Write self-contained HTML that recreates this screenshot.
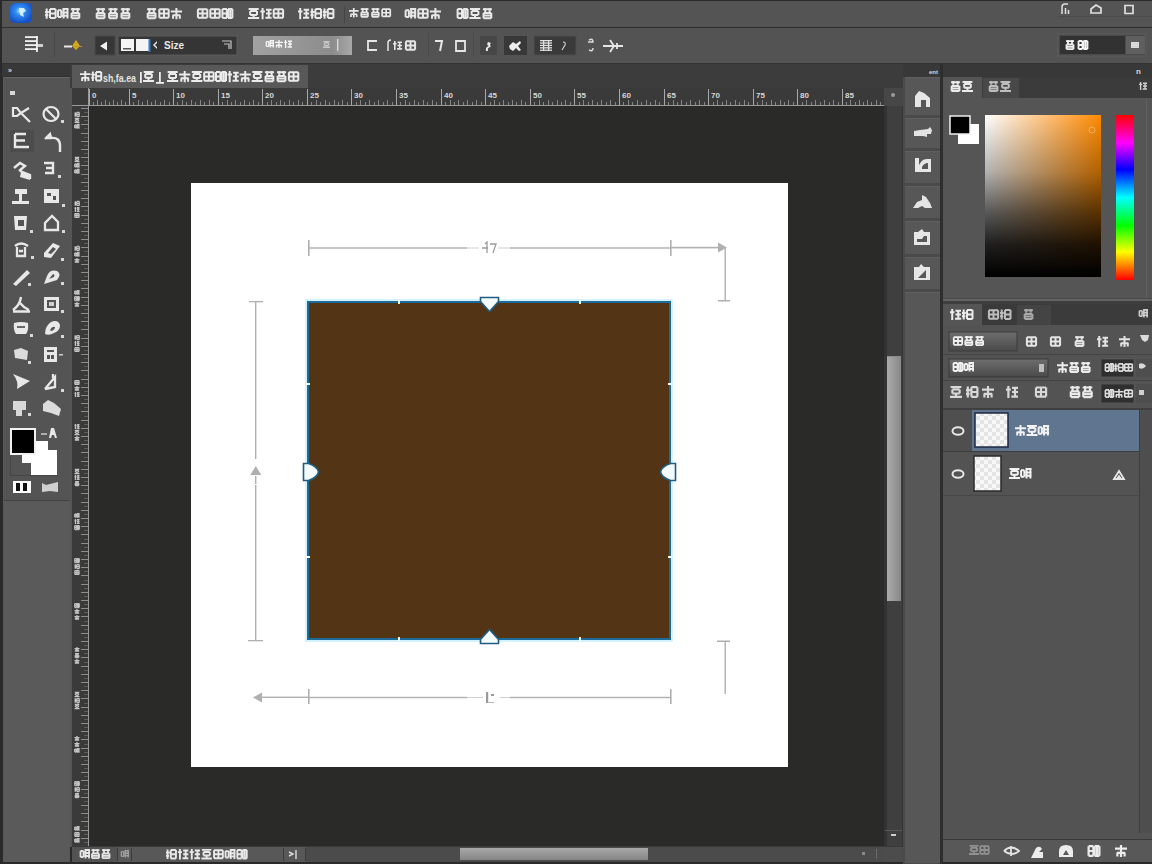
<!DOCTYPE html>
<html><head><meta charset="utf-8">
<style>
html,body{margin:0;padding:0;width:1152px;height:864px;overflow:hidden;background:#2a2a2a;font-family:"Liberation Sans",sans-serif;}
.a{position:absolute;}
.t{position:absolute;color:#e8e8e8;font-weight:bold;white-space:nowrap;}
</style></head><body>

<div class="a" style="left:0px;top:0px;width:1152px;height:864px;background:#2a2a2a;"></div>
<div class="a" style="left:2px;top:1px;width:1150px;height:26px;background:#545454;"></div>
<div class="a" style="left:2px;top:27px;width:1150px;height:1px;background:#2f2f2f;"></div>
<div class="a" style="left:2px;top:28px;width:1150px;height:35px;background:#535353;"></div>
<div class="a" style="left:2px;top:63px;width:1150px;height:1px;background:#333333;"></div>
<div class="a" style="left:2px;top:64px;width:68px;height:13px;background:#383838;"></div>
<div class="a" style="left:70px;top:64px;width:833px;height:24px;background:#3c3c3c;"></div>
<div class="a" style="left:903px;top:64px;width:249px;height:13px;background:#383838;"></div>
<div class="a" style="left:3px;top:77px;width:67px;height:785px;background:#535353;"></div>
<div class="a" style="left:72px;top:65px;width:236px;height:23px;background:#585858;"></div>
<div class="a" style="left:72px;top:88px;width:812px;height:18px;background:#3a3a3a;"></div>
<div class="a" style="left:72px;top:105px;width:812px;height:1px;background:#9a9a9a;"></div>
<div class="a" style="left:72px;top:106px;width:16px;height:741px;background:#3a3a3a;"></div>
<div class="a" style="left:88px;top:88px;width:1px;height:759px;background:#9a9a9a;"></div>
<div class="a" style="left:89px;top:106px;width:795px;height:741px;background:#2a2a29;"></div>
<div class="a" style="left:191px;top:183px;width:597px;height:584px;background:#ffffff;"></div>
<div class="a" style="left:307px;top:301px;width:360px;height:335px;background:#533515;border:2px solid #1e6a98"></div>
<div class="a" style="left:884px;top:88px;width:19px;height:759px;background:#3f3f3f;"></div>
<div class="a" style="left:887px;top:356px;width:14px;height:245px;background:#8c8c8c;"></div>
<div class="a" style="left:72px;top:847px;width:831px;height:15px;background:#4c4c4c;"></div>
<div class="a" style="left:460px;top:848px;width:188px;height:12px;background:#8a8a8a;"></div>
<div class="a" style="left:903px;top:77px;width:38px;height:787px;background:#4f4f4f;"></div>
<div class="a" style="left:943px;top:77px;width:209px;height:785px;background:#555555;"></div>
<svg class="a" style="left:0;top:0" width="1152" height="864" viewBox="0 0 1152 864">
<defs><radialGradient id="lg" cx="45%" cy="40%" r="60%"><stop offset="0" stop-color="#9fe0ff"/><stop offset="0.35" stop-color="#2f8cf0"/><stop offset="1" stop-color="#1450c8"/></radialGradient><linearGradient id="btn" x1="0" y1="0" x2="1" y2="0"><stop offset="0" stop-color="#a2a2a2"/><stop offset="0.8" stop-color="#8c8c8c"/><stop offset="0.9" stop-color="#9a9a9a"/><stop offset="1" stop-color="#a8a8a8"/></linearGradient><linearGradient id="dd" x1="0" y1="0" x2="0" y2="1"><stop offset="0" stop-color="#6e6e6e"/><stop offset="1" stop-color="#4a4a4a"/></linearGradient><linearGradient id="cpH" x1="0" y1="0" x2="1" y2="0"><stop offset="0" stop-color="#ffffff"/><stop offset="1" stop-color="#ff8a00"/></linearGradient><linearGradient id="cpV" x1="0" y1="0" x2="0" y2="1"><stop offset="0" stop-color="#000" stop-opacity="0"/><stop offset="0.35" stop-color="#000" stop-opacity="0.3"/><stop offset="0.6" stop-color="#000" stop-opacity="0.65"/><stop offset="0.8" stop-color="#000" stop-opacity="0.88"/><stop offset="1" stop-color="#000" stop-opacity="1"/></linearGradient><linearGradient id="hue" x1="0" y1="0" x2="0" y2="1"><stop offset="0" stop-color="#ff0000"/><stop offset="0.17" stop-color="#ff00ff"/><stop offset="0.33" stop-color="#0000ff"/><stop offset="0.5" stop-color="#00ffff"/><stop offset="0.67" stop-color="#00ff00"/><stop offset="0.83" stop-color="#ffff00"/><stop offset="1" stop-color="#ff0000"/></linearGradient><linearGradient id="thumb" x1="0" y1="0" x2="0" y2="1"><stop offset="0" stop-color="#a8a8a8"/><stop offset="1" stop-color="#868686"/></linearGradient><linearGradient id="vthumb" x1="0" y1="0" x2="1" y2="0"><stop offset="0" stop-color="#ababab"/><stop offset="1" stop-color="#888888"/></linearGradient><pattern id="chk" width="8" height="8" patternUnits="userSpaceOnUse"><rect width="8" height="8" fill="#f8f8f8"/><rect width="4" height="4" fill="#e4e4e4"/><rect x="4" y="4" width="4" height="4" fill="#e4e4e4"/></pattern></defs>
<rect x="10" y="3" width="22" height="20" rx="5" fill="url(#lg)"/>
<path d="M19 8 l5 0 l2 3 l-3 2 l1 4 l-4 -2 z" fill="#dff6ff" opacity="0.9"/>
<path d="M45.7 8.6h2.0v10.1h-2.0zM45.0 10.9h3.9v2.0h-3.9zM45.0 14.3h3.4v2.0h-3.4zM50.0 8.1h5.6v2.0h-5.6zM50.0 17.1h5.6v2.0h-5.6zM49.0 9.1h2.0v9.0h-2.0zM54.6 9.1h2.0v9.0h-2.0zM50.0 12.6h5.6v2.0h-5.6zM58.0 9.2h3.4v2.0h-3.4zM58.0 16.0h3.4v2.0h-3.4zM57.0 10.2h2.0v6.7h-2.0zM60.3 10.2h2.0v6.7h-2.0zM62.4 8.1h6.2v2.0h-6.2zM62.4 11.5h6.2v2.0h-6.2zM62.4 14.8h6.2v2.0h-6.2zM62.6 9.1h2.0v9.5h-2.0zM66.5 9.1h2.0v9.5h-2.0zM70.9 8.3h9.0v2.0h-9.0zM72.2 8.0h2.0v3.9h-2.0zM76.6 8.0h2.0v3.9h-2.0zM71.5 12.0h7.8v2.0h-7.8zM71.5 17.3h7.8v2.0h-7.8zM70.5 13.0h2.0v5.3h-2.0zM78.3 13.0h2.0v5.3h-2.0zM71.5 14.6h7.8v2.0h-7.8z" fill="#e8e8e8" opacity="1.0"/>
<path d="M96.1 8.3h9.0v2.0h-9.0zM97.4 8.0h2.0v3.9h-2.0zM101.8 8.0h2.0v3.9h-2.0zM96.7 12.0h7.8v2.0h-7.8zM96.7 17.3h7.8v2.0h-7.8zM95.7 13.0h2.0v5.3h-2.0zM103.5 13.0h2.0v5.3h-2.0zM96.7 14.6h7.8v2.0h-7.8zM108.5 8.3h9.0v2.0h-9.0zM109.8 8.0h2.0v3.9h-2.0zM114.2 8.0h2.0v3.9h-2.0zM109.1 12.0h7.8v2.0h-7.8zM109.1 17.3h7.8v2.0h-7.8zM108.1 13.0h2.0v5.3h-2.0zM115.9 13.0h2.0v5.3h-2.0zM109.1 14.6h7.8v2.0h-7.8zM120.9 8.3h9.0v2.0h-9.0zM122.2 8.0h2.0v3.9h-2.0zM126.6 8.0h2.0v3.9h-2.0zM121.5 12.0h7.8v2.0h-7.8zM121.5 17.3h7.8v2.0h-7.8zM120.5 13.0h2.0v5.3h-2.0zM128.3 13.0h2.0v5.3h-2.0zM121.5 14.6h7.8v2.0h-7.8z" fill="#e8e8e8" opacity="1.0"/>
<path d="M147.1 8.3h9.0v2.0h-9.0zM148.4 8.0h2.0v3.9h-2.0zM152.8 8.0h2.0v3.9h-2.0zM147.7 12.0h7.8v2.0h-7.8zM147.7 17.3h7.8v2.0h-7.8zM146.7 13.0h2.0v5.3h-2.0zM154.5 13.0h2.0v5.3h-2.0zM147.7 14.6h7.8v2.0h-7.8zM159.3 8.3h9.4v2.0h-9.4zM159.3 16.8h9.4v2.0h-9.4zM158.3 9.3h2.0v8.5h-2.0zM167.7 9.3h2.0v8.5h-2.0zM159.3 12.6h9.4v2.0h-9.4zM163.0 9.3h2.0v8.5h-2.0zM170.8 10.4h11.2v2.0h-11.2zM175.4 8.0h2.0v11.2h-2.0zM172.5 14.3h7.8v2.0h-7.8zM172.0 15.3h2.0v3.4h-2.0zM178.8 15.3h2.0v3.4h-2.0z" fill="#e8e8e8" opacity="1.0"/>
<path d="M197.9 8.3h9.4v2.0h-9.4zM197.9 16.8h9.4v2.0h-9.4zM196.9 9.3h2.0v8.5h-2.0zM206.3 9.3h2.0v8.5h-2.0zM197.9 12.6h9.4v2.0h-9.4zM201.6 9.3h2.0v8.5h-2.0zM210.3 8.3h9.4v2.0h-9.4zM210.3 16.8h9.4v2.0h-9.4zM209.3 9.3h2.0v8.5h-2.0zM218.7 9.3h2.0v8.5h-2.0zM210.3 12.6h9.4v2.0h-9.4zM214.0 9.3h2.0v8.5h-2.0zM222.4 8.1h4.5v2.0h-4.5zM222.4 17.1h4.5v2.0h-4.5zM221.4 9.1h2.0v9.0h-2.0zM225.8 9.1h2.0v9.0h-2.0zM222.4 12.6h4.5v2.0h-4.5zM228.0 8.1h4.5v2.0h-4.5zM228.0 17.1h4.5v2.0h-4.5zM227.0 9.1h2.0v9.0h-2.0zM231.4 9.1h2.0v9.0h-2.0zM229.2 9.1h2.0v9.0h-2.0z" fill="#e8e8e8" opacity="1.0"/>
<path d="M248.6 7.9h10.1v2.0h-10.1zM250.2 10.1h6.7v2.0h-6.7zM250.2 13.9h6.7v2.0h-6.7zM249.2 11.1h2.0v3.8h-2.0zM256.0 11.1h2.0v3.8h-2.0zM248.0 17.1h11.2v2.0h-11.2zM252.6 14.9h2.0v3.7h-2.0zM261.6 8.0h2.0v11.2h-2.0zM260.4 10.4h4.5v2.0h-4.5zM266.0 8.7h5.6v2.0h-5.6zM266.0 12.6h5.6v2.0h-5.6zM265.4 16.8h6.2v2.0h-6.2zM267.8 9.7h2.0v8.2h-2.0zM273.7 8.3h9.4v2.0h-9.4zM273.7 16.8h9.4v2.0h-9.4zM272.7 9.3h2.0v8.5h-2.0zM282.1 9.3h2.0v8.5h-2.0zM273.7 12.6h9.4v2.0h-9.4zM277.4 9.3h2.0v8.5h-2.0z" fill="#e8e8e8" opacity="1.0"/>
<path d="M299.2 8.0h2.0v11.2h-2.0zM298.0 10.4h4.5v2.0h-4.5zM303.6 8.7h5.6v2.0h-5.6zM303.6 12.6h5.6v2.0h-5.6zM303.0 16.8h6.2v2.0h-6.2zM305.4 9.7h2.0v8.2h-2.0zM311.1 8.6h2.0v10.1h-2.0zM310.4 10.9h3.9v2.0h-3.9zM310.4 14.3h3.4v2.0h-3.4zM315.4 8.1h5.6v2.0h-5.6zM315.4 17.1h5.6v2.0h-5.6zM314.4 9.1h2.0v9.0h-2.0zM320.0 9.1h2.0v9.0h-2.0zM315.4 12.6h5.6v2.0h-5.6zM323.5 8.6h2.0v10.1h-2.0zM322.8 10.9h3.9v2.0h-3.9zM322.8 14.3h3.4v2.0h-3.4zM327.8 8.1h5.6v2.0h-5.6zM327.8 17.1h5.6v2.0h-5.6zM326.8 9.1h2.0v9.0h-2.0zM332.4 9.1h2.0v9.0h-2.0zM327.8 12.6h5.6v2.0h-5.6z" fill="#e8e8e8" opacity="1.0"/>
<path d="M349.0 10.0h9.6v1.7h-9.6zM352.9 8.0h1.7v9.6h-1.7zM350.4 13.4h6.7v1.7h-6.7zM350.1 14.2h1.7v2.9h-1.7zM355.8 14.2h1.7v2.9h-1.7zM360.8 8.3h7.7v1.7h-7.7zM361.8 8.0h1.7v3.4h-1.7zM365.7 8.0h1.7v3.4h-1.7zM361.2 11.5h6.7v1.7h-6.7zM361.2 16.0h6.7v1.7h-6.7zM360.4 12.3h1.7v4.5h-1.7zM367.1 12.3h1.7v4.5h-1.7zM361.2 13.7h6.7v1.7h-6.7zM371.6 8.3h7.7v1.7h-7.7zM372.6 8.0h1.7v3.4h-1.7zM376.5 8.0h1.7v3.4h-1.7zM372.0 11.5h6.7v1.7h-6.7zM372.0 16.0h6.7v1.7h-6.7zM371.2 12.3h1.7v4.5h-1.7zM377.9 12.3h1.7v4.5h-1.7zM372.0 13.7h6.7v1.7h-6.7zM382.2 8.3h8.1v1.7h-8.1zM382.2 15.6h8.1v1.7h-8.1zM381.3 9.2h1.7v7.3h-1.7zM389.4 9.2h1.7v7.3h-1.7zM382.2 11.9h8.1v1.7h-8.1zM385.3 9.2h1.7v7.3h-1.7z" fill="#e8e8e8" opacity="1.0"/>
<path d="M405.6 9.2h3.4v2.0h-3.4zM405.6 16.0h3.4v2.0h-3.4zM404.6 10.2h2.0v6.7h-2.0zM407.9 10.2h2.0v6.7h-2.0zM410.0 8.1h6.2v2.0h-6.2zM410.0 11.5h6.2v2.0h-6.2zM410.0 14.8h6.2v2.0h-6.2zM410.2 9.1h2.0v9.5h-2.0zM414.1 9.1h2.0v9.5h-2.0zM418.3 8.3h9.4v2.0h-9.4zM418.3 16.8h9.4v2.0h-9.4zM417.3 9.3h2.0v8.5h-2.0zM426.7 9.3h2.0v8.5h-2.0zM418.3 12.6h9.4v2.0h-9.4zM422.0 9.3h2.0v8.5h-2.0zM429.8 10.4h11.2v2.0h-11.2zM434.4 8.0h2.0v11.2h-2.0zM431.5 14.3h7.8v2.0h-7.8zM431.0 15.3h2.0v3.4h-2.0zM437.8 15.3h2.0v3.4h-2.0z" fill="#e8e8e8" opacity="1.0"/>
<path d="M457.6 8.1h4.5v2.0h-4.5zM457.6 17.1h4.5v2.0h-4.5zM456.6 9.1h2.0v9.0h-2.0zM461.0 9.1h2.0v9.0h-2.0zM457.6 12.6h4.5v2.0h-4.5zM463.2 8.1h4.5v2.0h-4.5zM463.2 17.1h4.5v2.0h-4.5zM462.2 9.1h2.0v9.0h-2.0zM466.6 9.1h2.0v9.0h-2.0zM464.4 9.1h2.0v9.0h-2.0zM470.0 7.9h10.1v2.0h-10.1zM471.6 10.1h6.7v2.0h-6.7zM471.6 13.9h6.7v2.0h-6.7zM470.6 11.1h2.0v3.8h-2.0zM477.4 11.1h2.0v3.8h-2.0zM469.4 17.1h11.2v2.0h-11.2zM474.0 14.9h2.0v3.7h-2.0zM482.9 8.3h9.0v2.0h-9.0zM484.2 8.0h2.0v3.9h-2.0zM488.6 8.0h2.0v3.9h-2.0zM483.5 12.0h7.8v2.0h-7.8zM483.5 17.3h7.8v2.0h-7.8zM482.5 13.0h2.0v5.3h-2.0zM490.3 13.0h2.0v5.3h-2.0zM483.5 14.6h7.8v2.0h-7.8z" fill="#e8e8e8" opacity="1.0"/>
<rect x="344" y="6" width="1" height="17" fill="#454545" />
<path d="M1062 14 v-7 q0 -3 3 -3 h3 M1065.5 14 v-6 M1068.5 14 v-4" fill="none" stroke="#e0e0e0" stroke-width="1.5" />
<path d="M1091 9 l5 -4 l5 3 v5 h-10 z" fill="none" stroke="#e0e0e0" stroke-width="1.7" />
<path d="M1125 5.5 h8 v8 h-8 z" fill="none" stroke="#e0e0e0" stroke-width="1.7" />
<rect x="1058" y="16" width="94" height="1" fill="#4c4c4c" />
<rect x="25" y="36.2" width="13" height="1.8" fill="#f0f0f0" />
<rect x="25" y="40.2" width="11" height="1.8" fill="#f0f0f0" />
<rect x="25" y="44.2" width="13" height="1.8" fill="#f0f0f0" />
<rect x="25" y="48.2" width="13" height="1.8" fill="#f0f0f0" />
<rect x="36" y="36" width="1.8" height="16" fill="#f0f0f0" />
<rect x="38" y="44" width="5" height="3" fill="#cfcfcf" />
<rect x="54" y="32" width="1" height="25" fill="#474747" />
<rect x="64" y="45.5" width="8" height="2" fill="#e8e8e8" />
<path d="M72 46 l4 -6 l4 6 l-4 4 z" fill="#d8a818" />
<path d="M74 46 h8 v1 h-8z" fill="#b89830" />
<rect x="95" y="36" width="20" height="19" fill="#363636" stroke="#4a4a4a" stroke-width="1"/>
<path d="M100 46 l7 -4.5 v9 z" fill="#f2f2f2" />
<rect x="118" y="36" width="119" height="19" fill="#353535" stroke="#5c5c5c" stroke-width="1"/>
<rect x="121" y="39" width="13" height="12" fill="#f4f4f4" />
<rect x="123" y="48" width="8" height="1.5" fill="#555" />
<rect x="136" y="39" width="13" height="12" fill="#f4f4f4" />
<rect x="148.5" y="39" width="2" height="13" fill="#2b7fd0" />
<path d="M153 45 l4 -4 v2 l-2 2 l2 2 v2 z" fill="#e6e6e6" />
<text x="164" y="49" font-family="Liberation Sans" font-size="10" font-weight="bold" fill="#e8e8e8" >Size</text>
<path d="M222 41 h9 v8 M224 44 h5 v5" fill="none" stroke="#c8c8c8" stroke-width="1.2" />
<rect x="253" y="36" width="99" height="19" fill="url(#btn)" />
<path d="M266.4 40.9h2.4v1.4h-2.4zM266.4 45.7h2.4v1.4h-2.4zM265.7 41.6h1.4v4.8h-1.4zM268.1 41.6h1.4v4.8h-1.4zM269.6 40.1h4.4v1.4h-4.4zM269.6 42.5h4.4v1.4h-4.4zM269.6 44.9h4.4v1.4h-4.4zM269.7 40.8h1.4v6.8h-1.4zM272.5 40.8h1.4v6.8h-1.4zM275.0 41.7h8.0v1.4h-8.0zM278.3 40.0h1.4v8.0h-1.4zM276.2 44.5h5.6v1.4h-5.6zM275.9 45.2h1.4v2.4h-1.4zM280.7 45.2h1.4v2.4h-1.4zM284.9 40.0h1.4v8.0h-1.4zM284.0 41.7h3.2v1.4h-3.2zM288.0 40.5h4.0v1.4h-4.0zM288.0 43.3h4.0v1.4h-4.0zM287.6 46.3h4.4v1.4h-4.4zM289.3 41.2h1.4v5.8h-1.4z" fill="#f4f4f4" opacity="1.0"/>
<path d="M323.4 40.9h6.3v1.3h-6.3zM324.4 42.3h4.2v1.3h-4.2zM324.4 44.7h4.2v1.3h-4.2zM323.8 43.0h1.3v2.4h-1.3zM328.0 43.0h1.3v2.4h-1.3zM323.0 46.6h7.0v1.3h-7.0zM325.9 45.3h1.3v2.3h-1.3z" fill="#e0e0e0" opacity="0.7"/>
<rect x="337" y="39" width="1.4" height="12" fill="#dadada" />
<path d="M377 41 h-9 v9 h9" fill="none" stroke="#e6e6e6" stroke-width="1.8" />
<path d="M388 51 v-8 q0 -3 3 -3" fill="none" stroke="#e6e6e6" stroke-width="1.5" />
<path d="M394.0 41.0h1.6v9.0h-1.6zM393.0 42.9h3.6v1.6h-3.6zM397.5 41.5h4.5v1.6h-4.5zM397.5 44.7h4.5v1.6h-4.5zM397.1 48.1h5.0v1.6h-5.0zM398.9 42.4h1.6v6.6h-1.6z" fill="#e6e6e6" opacity="1.0"/>
<path d="M405.9 40.3h9.2v2.0h-9.2zM405.9 48.7h9.2v2.0h-9.2zM404.9 41.3h2.0v8.4h-2.0zM414.1 41.3h2.0v8.4h-2.0zM405.9 44.5h9.2v2.0h-9.2zM409.5 41.3h2.0v8.4h-2.0z" fill="#e6e6e6" opacity="1.0"/>
<rect x="428" y="33" width="1" height="24" fill="#4a4a4a" />
<path d="M435 41 h7 l-2 10" fill="none" stroke="#e6e6e6" stroke-width="2" />
<path d="M456 41 h9 v10 h-9 z" fill="none" stroke="#e6e6e6" stroke-width="1.8" />
<rect x="473" y="33" width="1" height="24" fill="#4a4a4a" />
<rect x="480" y="36" width="17" height="19" fill="#474747" />
<path d="M486 51 q-1 -4 3 -5 q-3 -1 -1 -4 l3 1 q-2 2 0 3 l-1 1 q-3 1 -2 4 z" fill="#ececec" />
<rect x="504" y="36" width="23" height="19" fill="#383838" />
<path d="M509 46 l4 -4 l3 2 l4 -3 l1 2 l-3 3 l3 4 l-2 1 l-3 -3 l-3 3 l-3 -2 z" fill="#ececec" />
<rect x="534" y="36" width="42" height="19" fill="#3a3a3a" stroke="#4e4e4e" stroke-width="1"/>
<rect x="540" y="40.0" width="12" height="1.3" fill="#e0e0e0" />
<rect x="540" y="42.4" width="12" height="1.3" fill="#e0e0e0" />
<rect x="540" y="44.8" width="12" height="1.3" fill="#e0e0e0" />
<rect x="540" y="47.2" width="12" height="1.3" fill="#e0e0e0" />
<rect x="540" y="49.6" width="12" height="1.3" fill="#e0e0e0" />
<rect x="543" y="40" width="1.2" height="11" fill="#e0e0e0" />
<rect x="548" y="40" width="1.2" height="11" fill="#e0e0e0" />
<path d="M563 42 q3 0 2 3 l-3 5" fill="none" stroke="#cfcfcf" stroke-width="1.2" />
<path d="M589 40 q4 -2 4 2 h-5 M589 50 q4 2 4 -2" fill="none" stroke="#dcdcdc" stroke-width="1.5" />
<path d="M603 46 h20 M610 40 l4 6 l-4 6 M617 43 v6" fill="none" stroke="#e6e6e6" stroke-width="1.8" />
<rect x="1058" y="34" width="88" height="22" fill="#4a4a4a" stroke="#5e5e5e" stroke-width="1"/>
<rect x="1060" y="36" width="65" height="18" fill="#323232" />
<rect x="1126" y="36" width="19" height="18" fill="#5f5f5f" />
<path d="M1066.0 40.3h8.0v1.8h-8.0zM1067.1 40.0h1.8v3.5h-1.8zM1071.1 40.0h1.8v3.5h-1.8zM1066.5 43.6h7.0v1.8h-7.0zM1066.5 48.3h7.0v1.8h-7.0zM1065.6 44.5h1.8v4.7h-1.8zM1072.6 44.5h1.8v4.7h-1.8zM1066.5 45.9h7.0v1.8h-7.0zM1078.5 40.1h4.0v1.8h-4.0zM1078.5 48.1h4.0v1.8h-4.0zM1077.6 41.0h1.8v8.0h-1.8zM1081.6 41.0h1.8v8.0h-1.8zM1078.5 44.1h4.0v1.8h-4.0zM1083.5 40.1h4.0v1.8h-4.0zM1083.5 48.1h4.0v1.8h-4.0zM1082.6 41.0h1.8v8.0h-1.8zM1086.6 41.0h1.8v8.0h-1.8zM1084.6 41.0h1.8v8.0h-1.8z" fill="#f2f2f2" opacity="1.0"/>
<path d="M1131 42 h8 v6 h-8 z" fill="#d8d8d8" />
<path d="M80.0 73.2h10.5v1.9h-10.5zM84.3 71.0h1.9v10.5h-1.9zM81.6 76.9h7.3v1.9h-7.3zM81.2 77.8h1.9v3.1h-1.9zM87.5 77.8h1.9v3.1h-1.9zM91.9 71.5h1.9v9.4h-1.9zM91.3 73.7h3.7v1.9h-3.7zM91.3 76.9h3.1v1.9h-3.1zM96.0 71.1h5.2v1.9h-5.2zM96.0 79.5h5.2v1.9h-5.2zM95.1 72.0h1.9v8.4h-1.9zM100.3 72.0h1.9v8.4h-1.9zM96.0 75.3h5.2v1.9h-5.2z" fill="#ececec" opacity="1.0"/>
<text x="103" y="82" font-family="Liberation Sans" font-size="10" font-weight="bold" fill="#e2e2e2" textLength="33" lengthAdjust="spacingAndGlyphs">sh,fa.ea</text>
<rect x="140" y="72" width="1.8" height="11" fill="#ececec" />
<path d="M143.6 70.9h9.9v2.0h-9.9zM145.2 73.1h6.6v2.0h-6.6zM145.2 76.8h6.6v2.0h-6.6zM144.2 74.1h2.0v3.7h-2.0zM150.8 74.1h2.0v3.7h-2.0zM143.0 79.9h11.0v2.0h-11.0zM147.5 77.8h2.0v3.6h-2.0z" fill="#ececec" opacity="1.0"/>
<rect x="159" y="72" width="1.8" height="11" fill="#ececec" />
<rect x="156" y="82" width="8" height="1.8" fill="#ececec" />
<path d="M167.6 70.9h10.1v2.0h-10.1zM169.2 73.1h6.7v2.0h-6.7zM169.2 76.9h6.7v2.0h-6.7zM168.2 74.1h2.0v3.8h-2.0zM175.0 74.1h2.0v3.8h-2.0zM167.0 80.1h11.2v2.0h-11.2zM171.6 77.9h2.0v3.7h-2.0zM179.1 73.4h11.2v2.0h-11.2zM183.7 71.0h2.0v11.2h-2.0zM180.8 77.3h7.8v2.0h-7.8zM180.3 78.3h2.0v3.4h-2.0zM187.1 78.3h2.0v3.4h-2.0zM191.8 70.9h10.1v2.0h-10.1zM193.4 73.1h6.7v2.0h-6.7zM193.4 76.9h6.7v2.0h-6.7zM192.4 74.1h2.0v3.8h-2.0zM199.2 74.1h2.0v3.8h-2.0zM191.2 80.1h11.2v2.0h-11.2zM195.8 77.9h2.0v3.7h-2.0zM204.2 71.3h9.4v2.0h-9.4zM204.2 79.8h9.4v2.0h-9.4zM203.2 72.3h2.0v8.5h-2.0zM212.6 72.3h2.0v8.5h-2.0zM204.2 75.6h9.4v2.0h-9.4zM207.9 72.3h2.0v8.5h-2.0zM216.0 71.1h4.5v2.0h-4.5zM216.0 80.1h4.5v2.0h-4.5zM215.0 72.1h2.0v9.0h-2.0zM219.4 72.1h2.0v9.0h-2.0zM216.0 75.6h4.5v2.0h-4.5zM221.6 71.1h4.5v2.0h-4.5zM221.6 80.1h4.5v2.0h-4.5zM220.6 72.1h2.0v9.0h-2.0zM225.0 72.1h2.0v9.0h-2.0zM222.8 72.1h2.0v9.0h-2.0zM228.7 71.0h2.0v11.2h-2.0zM227.5 73.4h4.5v2.0h-4.5zM233.1 71.7h5.6v2.0h-5.6zM233.1 75.6h5.6v2.0h-5.6zM232.5 79.8h6.2v2.0h-6.2zM234.9 72.7h2.0v8.2h-2.0zM239.6 73.4h11.2v2.0h-11.2zM244.2 71.0h2.0v11.2h-2.0zM241.3 77.3h7.8v2.0h-7.8zM240.8 78.3h2.0v3.4h-2.0zM247.6 78.3h2.0v3.4h-2.0zM252.3 70.9h10.1v2.0h-10.1zM253.9 73.1h6.7v2.0h-6.7zM253.9 76.9h6.7v2.0h-6.7zM252.9 74.1h2.0v3.8h-2.0zM259.7 74.1h2.0v3.8h-2.0zM251.7 80.1h11.2v2.0h-11.2zM256.3 77.9h2.0v3.7h-2.0zM264.9 71.3h9.0v2.0h-9.0zM266.2 71.0h2.0v3.9h-2.0zM270.6 71.0h2.0v3.9h-2.0zM265.5 75.0h7.8v2.0h-7.8zM265.5 80.3h7.8v2.0h-7.8zM264.5 76.0h2.0v5.3h-2.0zM272.3 76.0h2.0v5.3h-2.0zM265.5 77.6h7.8v2.0h-7.8zM277.0 71.3h9.0v2.0h-9.0zM278.3 71.0h2.0v3.9h-2.0zM282.7 71.0h2.0v3.9h-2.0zM277.6 75.0h7.8v2.0h-7.8zM277.6 80.3h7.8v2.0h-7.8zM276.6 76.0h2.0v5.3h-2.0zM284.4 76.0h2.0v5.3h-2.0zM277.6 77.6h7.8v2.0h-7.8zM288.9 71.3h9.4v2.0h-9.4zM288.9 79.8h9.4v2.0h-9.4zM287.9 72.3h2.0v8.5h-2.0zM297.3 72.3h2.0v8.5h-2.0zM288.9 75.6h9.4v2.0h-9.4zM292.6 72.3h2.0v8.5h-2.0z" fill="#ececec" opacity="1.0"/>
<rect x="89" y="89" width="1" height="16" fill="#a8a8a8" />
<text x="92" y="98" font-family="Liberation Sans" font-size="8" font-weight="bold" fill="#d6d6d6" >0</text>
<rect x="93" y="102" width="1" height="3" fill="#858585" />
<rect x="97" y="100" width="1" height="5" fill="#858585" />
<rect x="101" y="102" width="1" height="3" fill="#858585" />
<rect x="105" y="100" width="1" height="5" fill="#858585" />
<rect x="109" y="102" width="1" height="3" fill="#858585" />
<rect x="113" y="100" width="1" height="5" fill="#858585" />
<rect x="117" y="102" width="1" height="3" fill="#858585" />
<rect x="121" y="100" width="1" height="5" fill="#858585" />
<rect x="125" y="102" width="1" height="3" fill="#858585" />
<rect x="129" y="89" width="1" height="16" fill="#a8a8a8" />
<text x="132" y="98" font-family="Liberation Sans" font-size="8" font-weight="bold" fill="#d6d6d6" >5</text>
<rect x="133" y="102" width="1" height="3" fill="#858585" />
<rect x="138" y="100" width="1" height="5" fill="#858585" />
<rect x="142" y="102" width="1" height="3" fill="#858585" />
<rect x="147" y="100" width="1" height="5" fill="#858585" />
<rect x="151" y="102" width="1" height="3" fill="#858585" />
<rect x="155" y="100" width="1" height="5" fill="#858585" />
<rect x="160" y="102" width="1" height="3" fill="#858585" />
<rect x="164" y="100" width="1" height="5" fill="#858585" />
<rect x="169" y="102" width="1" height="3" fill="#858585" />
<rect x="173" y="89" width="1" height="16" fill="#a8a8a8" />
<text x="176" y="98" font-family="Liberation Sans" font-size="8" font-weight="bold" fill="#d6d6d6" >10</text>
<rect x="177" y="102" width="1" height="3" fill="#858585" />
<rect x="182" y="100" width="1" height="5" fill="#858585" />
<rect x="186" y="102" width="1" height="3" fill="#858585" />
<rect x="191" y="100" width="1" height="5" fill="#858585" />
<rect x="195" y="102" width="1" height="3" fill="#858585" />
<rect x="200" y="100" width="1" height="5" fill="#858585" />
<rect x="204" y="102" width="1" height="3" fill="#858585" />
<rect x="209" y="100" width="1" height="5" fill="#858585" />
<rect x="213" y="102" width="1" height="3" fill="#858585" />
<rect x="218" y="89" width="1" height="16" fill="#a8a8a8" />
<text x="221" y="98" font-family="Liberation Sans" font-size="8" font-weight="bold" fill="#d6d6d6" >15</text>
<rect x="222" y="102" width="1" height="3" fill="#858585" />
<rect x="227" y="100" width="1" height="5" fill="#858585" />
<rect x="231" y="102" width="1" height="3" fill="#858585" />
<rect x="235" y="100" width="1" height="5" fill="#858585" />
<rect x="240" y="102" width="1" height="3" fill="#858585" />
<rect x="244" y="100" width="1" height="5" fill="#858585" />
<rect x="249" y="102" width="1" height="3" fill="#858585" />
<rect x="253" y="100" width="1" height="5" fill="#858585" />
<rect x="258" y="102" width="1" height="3" fill="#858585" />
<rect x="262" y="89" width="1" height="16" fill="#a8a8a8" />
<text x="265" y="98" font-family="Liberation Sans" font-size="8" font-weight="bold" fill="#d6d6d6" >20</text>
<rect x="267" y="102" width="1" height="3" fill="#858585" />
<rect x="271" y="100" width="1" height="5" fill="#858585" />
<rect x="276" y="102" width="1" height="3" fill="#858585" />
<rect x="280" y="100" width="1" height="5" fill="#858585" />
<rect x="284" y="102" width="1" height="3" fill="#858585" />
<rect x="289" y="100" width="1" height="5" fill="#858585" />
<rect x="293" y="102" width="1" height="3" fill="#858585" />
<rect x="298" y="100" width="1" height="5" fill="#858585" />
<rect x="302" y="102" width="1" height="3" fill="#858585" />
<rect x="307" y="89" width="1" height="16" fill="#a8a8a8" />
<text x="310" y="98" font-family="Liberation Sans" font-size="8" font-weight="bold" fill="#d6d6d6" >25</text>
<rect x="311" y="102" width="1" height="3" fill="#858585" />
<rect x="316" y="100" width="1" height="5" fill="#858585" />
<rect x="320" y="102" width="1" height="3" fill="#858585" />
<rect x="325" y="100" width="1" height="5" fill="#858585" />
<rect x="329" y="102" width="1" height="3" fill="#858585" />
<rect x="334" y="100" width="1" height="5" fill="#858585" />
<rect x="338" y="102" width="1" height="3" fill="#858585" />
<rect x="342" y="100" width="1" height="5" fill="#858585" />
<rect x="347" y="102" width="1" height="3" fill="#858585" />
<rect x="351" y="89" width="1" height="16" fill="#a8a8a8" />
<text x="354" y="98" font-family="Liberation Sans" font-size="8" font-weight="bold" fill="#d6d6d6" >30</text>
<rect x="356" y="102" width="1" height="3" fill="#858585" />
<rect x="360" y="100" width="1" height="5" fill="#858585" />
<rect x="365" y="102" width="1" height="3" fill="#858585" />
<rect x="369" y="100" width="1" height="5" fill="#858585" />
<rect x="374" y="102" width="1" height="3" fill="#858585" />
<rect x="378" y="100" width="1" height="5" fill="#858585" />
<rect x="383" y="102" width="1" height="3" fill="#858585" />
<rect x="387" y="100" width="1" height="5" fill="#858585" />
<rect x="392" y="102" width="1" height="3" fill="#858585" />
<rect x="396" y="89" width="1" height="16" fill="#a8a8a8" />
<text x="399" y="98" font-family="Liberation Sans" font-size="8" font-weight="bold" fill="#d6d6d6" >35</text>
<rect x="400" y="102" width="1" height="3" fill="#858585" />
<rect x="405" y="100" width="1" height="5" fill="#858585" />
<rect x="409" y="102" width="1" height="3" fill="#858585" />
<rect x="414" y="100" width="1" height="5" fill="#858585" />
<rect x="418" y="102" width="1" height="3" fill="#858585" />
<rect x="423" y="100" width="1" height="5" fill="#858585" />
<rect x="427" y="102" width="1" height="3" fill="#858585" />
<rect x="432" y="100" width="1" height="5" fill="#858585" />
<rect x="436" y="102" width="1" height="3" fill="#858585" />
<rect x="441" y="89" width="1" height="16" fill="#a8a8a8" />
<text x="444" y="98" font-family="Liberation Sans" font-size="8" font-weight="bold" fill="#d6d6d6" >40</text>
<rect x="445" y="102" width="1" height="3" fill="#858585" />
<rect x="450" y="100" width="1" height="5" fill="#858585" />
<rect x="454" y="102" width="1" height="3" fill="#858585" />
<rect x="458" y="100" width="1" height="5" fill="#858585" />
<rect x="463" y="102" width="1" height="3" fill="#858585" />
<rect x="467" y="100" width="1" height="5" fill="#858585" />
<rect x="472" y="102" width="1" height="3" fill="#858585" />
<rect x="476" y="100" width="1" height="5" fill="#858585" />
<rect x="481" y="102" width="1" height="3" fill="#858585" />
<rect x="485" y="89" width="1" height="16" fill="#a8a8a8" />
<text x="488" y="98" font-family="Liberation Sans" font-size="8" font-weight="bold" fill="#d6d6d6" >45</text>
<rect x="490" y="102" width="1" height="3" fill="#858585" />
<rect x="494" y="100" width="1" height="5" fill="#858585" />
<rect x="499" y="102" width="1" height="3" fill="#858585" />
<rect x="503" y="100" width="1" height="5" fill="#858585" />
<rect x="508" y="102" width="1" height="3" fill="#858585" />
<rect x="512" y="100" width="1" height="5" fill="#858585" />
<rect x="516" y="102" width="1" height="3" fill="#858585" />
<rect x="521" y="100" width="1" height="5" fill="#858585" />
<rect x="525" y="102" width="1" height="3" fill="#858585" />
<rect x="530" y="89" width="1" height="16" fill="#a8a8a8" />
<text x="533" y="98" font-family="Liberation Sans" font-size="8" font-weight="bold" fill="#d6d6d6" >50</text>
<rect x="534" y="102" width="1" height="3" fill="#858585" />
<rect x="539" y="100" width="1" height="5" fill="#858585" />
<rect x="543" y="102" width="1" height="3" fill="#858585" />
<rect x="548" y="100" width="1" height="5" fill="#858585" />
<rect x="552" y="102" width="1" height="3" fill="#858585" />
<rect x="557" y="100" width="1" height="5" fill="#858585" />
<rect x="561" y="102" width="1" height="3" fill="#858585" />
<rect x="565" y="100" width="1" height="5" fill="#858585" />
<rect x="570" y="102" width="1" height="3" fill="#858585" />
<rect x="574" y="89" width="1" height="16" fill="#a8a8a8" />
<text x="577" y="98" font-family="Liberation Sans" font-size="8" font-weight="bold" fill="#d6d6d6" >55</text>
<rect x="579" y="102" width="1" height="3" fill="#858585" />
<rect x="583" y="100" width="1" height="5" fill="#858585" />
<rect x="588" y="102" width="1" height="3" fill="#858585" />
<rect x="592" y="100" width="1" height="5" fill="#858585" />
<rect x="597" y="102" width="1" height="3" fill="#858585" />
<rect x="601" y="100" width="1" height="5" fill="#858585" />
<rect x="606" y="102" width="1" height="3" fill="#858585" />
<rect x="610" y="100" width="1" height="5" fill="#858585" />
<rect x="615" y="102" width="1" height="3" fill="#858585" />
<rect x="619" y="89" width="1" height="16" fill="#a8a8a8" />
<text x="622" y="98" font-family="Liberation Sans" font-size="8" font-weight="bold" fill="#d6d6d6" >60</text>
<rect x="623" y="102" width="1" height="3" fill="#858585" />
<rect x="628" y="100" width="1" height="5" fill="#858585" />
<rect x="632" y="102" width="1" height="3" fill="#858585" />
<rect x="637" y="100" width="1" height="5" fill="#858585" />
<rect x="641" y="102" width="1" height="3" fill="#858585" />
<rect x="646" y="100" width="1" height="5" fill="#858585" />
<rect x="650" y="102" width="1" height="3" fill="#858585" />
<rect x="655" y="100" width="1" height="5" fill="#858585" />
<rect x="659" y="102" width="1" height="3" fill="#858585" />
<rect x="664" y="89" width="1" height="16" fill="#a8a8a8" />
<text x="667" y="98" font-family="Liberation Sans" font-size="8" font-weight="bold" fill="#d6d6d6" >65</text>
<rect x="668" y="102" width="1" height="3" fill="#858585" />
<rect x="673" y="100" width="1" height="5" fill="#858585" />
<rect x="677" y="102" width="1" height="3" fill="#858585" />
<rect x="681" y="100" width="1" height="5" fill="#858585" />
<rect x="686" y="102" width="1" height="3" fill="#858585" />
<rect x="690" y="100" width="1" height="5" fill="#858585" />
<rect x="695" y="102" width="1" height="3" fill="#858585" />
<rect x="699" y="100" width="1" height="5" fill="#858585" />
<rect x="704" y="102" width="1" height="3" fill="#858585" />
<rect x="708" y="89" width="1" height="16" fill="#a8a8a8" />
<text x="711" y="98" font-family="Liberation Sans" font-size="8" font-weight="bold" fill="#d6d6d6" >70</text>
<rect x="713" y="102" width="1" height="3" fill="#858585" />
<rect x="717" y="100" width="1" height="5" fill="#858585" />
<rect x="722" y="102" width="1" height="3" fill="#858585" />
<rect x="726" y="100" width="1" height="5" fill="#858585" />
<rect x="730" y="102" width="1" height="3" fill="#858585" />
<rect x="735" y="100" width="1" height="5" fill="#858585" />
<rect x="739" y="102" width="1" height="3" fill="#858585" />
<rect x="744" y="100" width="1" height="5" fill="#858585" />
<rect x="748" y="102" width="1" height="3" fill="#858585" />
<rect x="753" y="89" width="1" height="16" fill="#a8a8a8" />
<text x="756" y="98" font-family="Liberation Sans" font-size="8" font-weight="bold" fill="#d6d6d6" >75</text>
<rect x="757" y="102" width="1" height="3" fill="#858585" />
<rect x="762" y="100" width="1" height="5" fill="#858585" />
<rect x="766" y="102" width="1" height="3" fill="#858585" />
<rect x="771" y="100" width="1" height="5" fill="#858585" />
<rect x="775" y="102" width="1" height="3" fill="#858585" />
<rect x="780" y="100" width="1" height="5" fill="#858585" />
<rect x="784" y="102" width="1" height="3" fill="#858585" />
<rect x="788" y="100" width="1" height="5" fill="#858585" />
<rect x="793" y="102" width="1" height="3" fill="#858585" />
<rect x="797" y="89" width="1" height="16" fill="#a8a8a8" />
<text x="800" y="98" font-family="Liberation Sans" font-size="8" font-weight="bold" fill="#d6d6d6" >80</text>
<rect x="802" y="102" width="1" height="3" fill="#858585" />
<rect x="806" y="100" width="1" height="5" fill="#858585" />
<rect x="811" y="102" width="1" height="3" fill="#858585" />
<rect x="815" y="100" width="1" height="5" fill="#858585" />
<rect x="820" y="102" width="1" height="3" fill="#858585" />
<rect x="824" y="100" width="1" height="5" fill="#858585" />
<rect x="829" y="102" width="1" height="3" fill="#858585" />
<rect x="833" y="100" width="1" height="5" fill="#858585" />
<rect x="838" y="102" width="1" height="3" fill="#858585" />
<rect x="842" y="89" width="1" height="16" fill="#a8a8a8" />
<text x="845" y="98" font-family="Liberation Sans" font-size="8" font-weight="bold" fill="#d6d6d6" >85</text>
<rect x="846" y="102" width="1" height="3" fill="#858585" />
<rect x="850" y="100" width="1" height="5" fill="#858585" />
<rect x="855" y="102" width="1" height="3" fill="#858585" />
<rect x="859" y="100" width="1" height="5" fill="#858585" />
<rect x="863" y="102" width="1" height="3" fill="#858585" />
<rect x="867" y="100" width="1" height="5" fill="#858585" />
<rect x="871" y="102" width="1" height="3" fill="#858585" />
<rect x="876" y="100" width="1" height="5" fill="#858585" />
<rect x="880" y="102" width="1" height="3" fill="#858585" />
<rect x="884" y="88" width="19" height="18" fill="#474747" />
<circle cx="893" cy="95" r="2" fill="#9a9a9a"/>
<rect x="70" y="88" width="2" height="759" fill="#555555" />
<rect x="81" y="108" width="7" height="1" fill="#8c8c8c" />
<rect x="84" y="112" width="4" height="1" fill="#5c5c5c" />
<rect x="81" y="116" width="7" height="1" fill="#8c8c8c" />
<rect x="84" y="120" width="4" height="1" fill="#5c5c5c" />
<rect x="81" y="124" width="7" height="1" fill="#8c8c8c" />
<rect x="84" y="128" width="4" height="1" fill="#5c5c5c" />
<rect x="81" y="133" width="7" height="1" fill="#8c8c8c" />
<rect x="84" y="137" width="4" height="1" fill="#5c5c5c" />
<rect x="81" y="141" width="7" height="1" fill="#8c8c8c" />
<rect x="84" y="145" width="4" height="1" fill="#5c5c5c" />
<rect x="81" y="149" width="7" height="1" fill="#8c8c8c" />
<rect x="84" y="153" width="4" height="1" fill="#5c5c5c" />
<rect x="81" y="157" width="7" height="1" fill="#8c8c8c" />
<rect x="84" y="161" width="4" height="1" fill="#5c5c5c" />
<rect x="81" y="165" width="7" height="1" fill="#8c8c8c" />
<rect x="84" y="169" width="4" height="1" fill="#5c5c5c" />
<rect x="81" y="174" width="7" height="1" fill="#8c8c8c" />
<rect x="84" y="178" width="4" height="1" fill="#5c5c5c" />
<rect x="81" y="182" width="7" height="1" fill="#8c8c8c" />
<rect x="84" y="186" width="4" height="1" fill="#5c5c5c" />
<rect x="81" y="190" width="7" height="1" fill="#8c8c8c" />
<rect x="84" y="194" width="4" height="1" fill="#5c5c5c" />
<rect x="81" y="198" width="7" height="1" fill="#8c8c8c" />
<rect x="84" y="202" width="4" height="1" fill="#5c5c5c" />
<rect x="81" y="206" width="7" height="1" fill="#8c8c8c" />
<rect x="84" y="210" width="4" height="1" fill="#5c5c5c" />
<rect x="81" y="215" width="7" height="1" fill="#8c8c8c" />
<rect x="84" y="219" width="4" height="1" fill="#5c5c5c" />
<rect x="81" y="223" width="7" height="1" fill="#8c8c8c" />
<rect x="84" y="227" width="4" height="1" fill="#5c5c5c" />
<rect x="81" y="231" width="7" height="1" fill="#8c8c8c" />
<rect x="84" y="235" width="4" height="1" fill="#5c5c5c" />
<rect x="81" y="239" width="7" height="1" fill="#8c8c8c" />
<rect x="84" y="243" width="4" height="1" fill="#5c5c5c" />
<rect x="81" y="247" width="7" height="1" fill="#8c8c8c" />
<rect x="84" y="251" width="4" height="1" fill="#5c5c5c" />
<rect x="81" y="256" width="7" height="1" fill="#8c8c8c" />
<rect x="84" y="260" width="4" height="1" fill="#5c5c5c" />
<rect x="81" y="264" width="7" height="1" fill="#8c8c8c" />
<rect x="84" y="268" width="4" height="1" fill="#5c5c5c" />
<rect x="81" y="272" width="7" height="1" fill="#8c8c8c" />
<rect x="84" y="276" width="4" height="1" fill="#5c5c5c" />
<rect x="81" y="280" width="7" height="1" fill="#8c8c8c" />
<rect x="84" y="284" width="4" height="1" fill="#5c5c5c" />
<rect x="81" y="288" width="7" height="1" fill="#8c8c8c" />
<rect x="84" y="292" width="4" height="1" fill="#5c5c5c" />
<rect x="81" y="297" width="7" height="1" fill="#8c8c8c" />
<rect x="84" y="301" width="4" height="1" fill="#5c5c5c" />
<rect x="81" y="305" width="7" height="1" fill="#8c8c8c" />
<rect x="84" y="309" width="4" height="1" fill="#5c5c5c" />
<rect x="81" y="313" width="7" height="1" fill="#8c8c8c" />
<rect x="84" y="317" width="4" height="1" fill="#5c5c5c" />
<rect x="81" y="321" width="7" height="1" fill="#8c8c8c" />
<rect x="84" y="325" width="4" height="1" fill="#5c5c5c" />
<rect x="81" y="329" width="7" height="1" fill="#8c8c8c" />
<rect x="84" y="334" width="4" height="1" fill="#5c5c5c" />
<rect x="81" y="338" width="7" height="1" fill="#8c8c8c" />
<rect x="84" y="342" width="4" height="1" fill="#5c5c5c" />
<rect x="81" y="346" width="7" height="1" fill="#8c8c8c" />
<rect x="84" y="350" width="4" height="1" fill="#5c5c5c" />
<rect x="81" y="354" width="7" height="1" fill="#8c8c8c" />
<rect x="84" y="358" width="4" height="1" fill="#5c5c5c" />
<rect x="81" y="362" width="7" height="1" fill="#8c8c8c" />
<rect x="84" y="366" width="4" height="1" fill="#5c5c5c" />
<rect x="81" y="370" width="7" height="1" fill="#8c8c8c" />
<rect x="84" y="375" width="4" height="1" fill="#5c5c5c" />
<rect x="81" y="379" width="7" height="1" fill="#8c8c8c" />
<rect x="84" y="383" width="4" height="1" fill="#5c5c5c" />
<rect x="81" y="387" width="7" height="1" fill="#8c8c8c" />
<rect x="84" y="391" width="4" height="1" fill="#5c5c5c" />
<rect x="81" y="395" width="7" height="1" fill="#8c8c8c" />
<rect x="84" y="399" width="4" height="1" fill="#5c5c5c" />
<rect x="81" y="403" width="7" height="1" fill="#8c8c8c" />
<rect x="84" y="407" width="4" height="1" fill="#5c5c5c" />
<rect x="81" y="411" width="7" height="1" fill="#8c8c8c" />
<rect x="84" y="416" width="4" height="1" fill="#5c5c5c" />
<rect x="81" y="420" width="7" height="1" fill="#8c8c8c" />
<rect x="84" y="424" width="4" height="1" fill="#5c5c5c" />
<rect x="81" y="428" width="7" height="1" fill="#8c8c8c" />
<rect x="84" y="432" width="4" height="1" fill="#5c5c5c" />
<rect x="81" y="436" width="7" height="1" fill="#8c8c8c" />
<rect x="84" y="440" width="4" height="1" fill="#5c5c5c" />
<rect x="81" y="444" width="7" height="1" fill="#8c8c8c" />
<rect x="84" y="448" width="4" height="1" fill="#5c5c5c" />
<rect x="81" y="452" width="7" height="1" fill="#8c8c8c" />
<rect x="84" y="457" width="4" height="1" fill="#5c5c5c" />
<rect x="81" y="461" width="7" height="1" fill="#8c8c8c" />
<rect x="84" y="465" width="4" height="1" fill="#5c5c5c" />
<rect x="81" y="469" width="7" height="1" fill="#8c8c8c" />
<rect x="84" y="473" width="4" height="1" fill="#5c5c5c" />
<rect x="81" y="477" width="7" height="1" fill="#8c8c8c" />
<rect x="84" y="481" width="4" height="1" fill="#5c5c5c" />
<rect x="81" y="485" width="7" height="1" fill="#8c8c8c" />
<rect x="84" y="489" width="4" height="1" fill="#5c5c5c" />
<rect x="81" y="493" width="7" height="1" fill="#8c8c8c" />
<rect x="84" y="498" width="4" height="1" fill="#5c5c5c" />
<rect x="81" y="502" width="7" height="1" fill="#8c8c8c" />
<rect x="84" y="506" width="4" height="1" fill="#5c5c5c" />
<rect x="81" y="510" width="7" height="1" fill="#8c8c8c" />
<rect x="84" y="514" width="4" height="1" fill="#5c5c5c" />
<rect x="81" y="518" width="7" height="1" fill="#8c8c8c" />
<rect x="84" y="522" width="4" height="1" fill="#5c5c5c" />
<rect x="81" y="526" width="7" height="1" fill="#8c8c8c" />
<rect x="84" y="530" width="4" height="1" fill="#5c5c5c" />
<rect x="81" y="534" width="7" height="1" fill="#8c8c8c" />
<rect x="84" y="539" width="4" height="1" fill="#5c5c5c" />
<rect x="81" y="543" width="7" height="1" fill="#8c8c8c" />
<rect x="84" y="547" width="4" height="1" fill="#5c5c5c" />
<rect x="81" y="551" width="7" height="1" fill="#8c8c8c" />
<rect x="84" y="555" width="4" height="1" fill="#5c5c5c" />
<rect x="81" y="559" width="7" height="1" fill="#8c8c8c" />
<rect x="84" y="563" width="4" height="1" fill="#5c5c5c" />
<rect x="81" y="567" width="7" height="1" fill="#8c8c8c" />
<rect x="84" y="571" width="4" height="1" fill="#5c5c5c" />
<rect x="81" y="575" width="7" height="1" fill="#8c8c8c" />
<rect x="84" y="580" width="4" height="1" fill="#5c5c5c" />
<rect x="81" y="584" width="7" height="1" fill="#8c8c8c" />
<rect x="84" y="588" width="4" height="1" fill="#5c5c5c" />
<rect x="81" y="592" width="7" height="1" fill="#8c8c8c" />
<rect x="84" y="596" width="4" height="1" fill="#5c5c5c" />
<rect x="81" y="600" width="7" height="1" fill="#8c8c8c" />
<rect x="84" y="604" width="4" height="1" fill="#5c5c5c" />
<rect x="81" y="608" width="7" height="1" fill="#8c8c8c" />
<rect x="84" y="612" width="4" height="1" fill="#5c5c5c" />
<rect x="81" y="616" width="7" height="1" fill="#8c8c8c" />
<rect x="84" y="621" width="4" height="1" fill="#5c5c5c" />
<rect x="81" y="625" width="7" height="1" fill="#8c8c8c" />
<rect x="84" y="629" width="4" height="1" fill="#5c5c5c" />
<rect x="81" y="633" width="7" height="1" fill="#8c8c8c" />
<rect x="84" y="637" width="4" height="1" fill="#5c5c5c" />
<rect x="81" y="641" width="7" height="1" fill="#8c8c8c" />
<rect x="84" y="645" width="4" height="1" fill="#5c5c5c" />
<rect x="81" y="649" width="7" height="1" fill="#8c8c8c" />
<rect x="84" y="653" width="4" height="1" fill="#5c5c5c" />
<rect x="81" y="657" width="7" height="1" fill="#8c8c8c" />
<rect x="84" y="662" width="4" height="1" fill="#5c5c5c" />
<rect x="81" y="666" width="7" height="1" fill="#8c8c8c" />
<rect x="84" y="670" width="4" height="1" fill="#5c5c5c" />
<rect x="81" y="674" width="7" height="1" fill="#8c8c8c" />
<rect x="84" y="678" width="4" height="1" fill="#5c5c5c" />
<rect x="81" y="682" width="7" height="1" fill="#8c8c8c" />
<rect x="84" y="686" width="4" height="1" fill="#5c5c5c" />
<rect x="81" y="690" width="7" height="1" fill="#8c8c8c" />
<rect x="84" y="694" width="4" height="1" fill="#5c5c5c" />
<rect x="81" y="698" width="7" height="1" fill="#8c8c8c" />
<rect x="84" y="703" width="4" height="1" fill="#5c5c5c" />
<rect x="81" y="707" width="7" height="1" fill="#8c8c8c" />
<rect x="84" y="711" width="4" height="1" fill="#5c5c5c" />
<rect x="81" y="715" width="7" height="1" fill="#8c8c8c" />
<rect x="84" y="719" width="4" height="1" fill="#5c5c5c" />
<rect x="81" y="723" width="7" height="1" fill="#8c8c8c" />
<rect x="84" y="727" width="4" height="1" fill="#5c5c5c" />
<rect x="81" y="731" width="7" height="1" fill="#8c8c8c" />
<rect x="84" y="735" width="4" height="1" fill="#5c5c5c" />
<rect x="81" y="739" width="7" height="1" fill="#8c8c8c" />
<rect x="84" y="744" width="4" height="1" fill="#5c5c5c" />
<rect x="81" y="748" width="7" height="1" fill="#8c8c8c" />
<rect x="84" y="752" width="4" height="1" fill="#5c5c5c" />
<rect x="81" y="756" width="7" height="1" fill="#8c8c8c" />
<rect x="84" y="760" width="4" height="1" fill="#5c5c5c" />
<rect x="81" y="764" width="7" height="1" fill="#8c8c8c" />
<rect x="84" y="768" width="4" height="1" fill="#5c5c5c" />
<rect x="81" y="772" width="7" height="1" fill="#8c8c8c" />
<rect x="84" y="776" width="4" height="1" fill="#5c5c5c" />
<rect x="81" y="780" width="7" height="1" fill="#8c8c8c" />
<rect x="84" y="785" width="4" height="1" fill="#5c5c5c" />
<rect x="81" y="789" width="7" height="1" fill="#8c8c8c" />
<rect x="84" y="793" width="4" height="1" fill="#5c5c5c" />
<rect x="81" y="797" width="7" height="1" fill="#8c8c8c" />
<rect x="84" y="801" width="4" height="1" fill="#5c5c5c" />
<rect x="81" y="805" width="7" height="1" fill="#8c8c8c" />
<rect x="84" y="809" width="4" height="1" fill="#5c5c5c" />
<rect x="81" y="813" width="7" height="1" fill="#8c8c8c" />
<rect x="84" y="817" width="4" height="1" fill="#5c5c5c" />
<rect x="81" y="821" width="7" height="1" fill="#8c8c8c" />
<rect x="84" y="826" width="4" height="1" fill="#5c5c5c" />
<rect x="81" y="830" width="7" height="1" fill="#8c8c8c" />
<rect x="84" y="834" width="4" height="1" fill="#5c5c5c" />
<rect x="81" y="838" width="7" height="1" fill="#8c8c8c" />
<rect x="84" y="842" width="4" height="1" fill="#5c5c5c" />
<path d="M74.6 112.2h1.3v4.5h-1.3zM74.5 113.1h1.8v1.3h-1.8zM74.5 114.6h1.5v1.3h-1.5zM76.8 111.8h2.5v1.3h-2.5zM76.8 115.8h2.5v1.3h-2.5zM76.1 112.5h1.3v4.0h-1.3zM78.6 112.5h1.3v4.0h-1.3zM76.8 113.8h2.5v1.3h-2.5z" fill="#c4c4c4" opacity="1.0"/>
<path d="M74.8 117.8h4.5v1.3h-4.5zM75.5 118.8h3.0v1.3h-3.0zM75.5 120.4h3.0v1.3h-3.0zM74.8 119.4h1.3v1.7h-1.3zM77.8 119.4h1.3v1.7h-1.3zM74.5 121.8h5.0v1.3h-5.0zM76.3 121.1h1.3v1.6h-1.3z" fill="#c4c4c4" opacity="1.0"/>
<path d="M74.8 124.3h1.5v1.3h-1.5zM74.8 127.3h1.5v1.3h-1.5zM74.1 125.0h1.3v3.0h-1.3zM75.6 125.0h1.3v3.0h-1.3zM76.8 123.8h2.8v1.3h-2.8zM76.8 125.3h2.8v1.3h-2.8zM76.8 126.8h2.8v1.3h-2.8zM76.6 124.5h1.3v4.2h-1.3zM78.3 124.5h1.3v4.2h-1.3z" fill="#c4c4c4" opacity="1.0"/>
<path d="M74.8 156.8h4.5v1.3h-4.5zM75.5 157.8h3.0v1.3h-3.0zM75.5 159.4h3.0v1.3h-3.0zM74.8 158.4h1.3v1.7h-1.3zM77.8 158.4h1.3v1.7h-1.3zM74.5 160.8h5.0v1.3h-5.0zM76.3 160.1h1.3v1.6h-1.3z" fill="#c4c4c4" opacity="1.0"/>
<path d="M74.8 163.3h1.5v1.3h-1.5zM74.8 166.3h1.5v1.3h-1.5zM74.1 164.0h1.3v3.0h-1.3zM75.6 164.0h1.3v3.0h-1.3zM76.8 162.8h2.8v1.3h-2.8zM76.8 164.3h2.8v1.3h-2.8zM76.8 165.8h2.8v1.3h-2.8zM76.6 163.5h1.3v4.2h-1.3zM78.3 163.5h1.3v4.2h-1.3z" fill="#c4c4c4" opacity="1.0"/>
<path d="M74.8 169.3h1.5v1.3h-1.5zM74.8 172.3h1.5v1.3h-1.5zM74.1 170.0h1.3v3.0h-1.3zM75.6 170.0h1.3v3.0h-1.3zM76.8 168.8h2.8v1.3h-2.8zM76.8 170.3h2.8v1.3h-2.8zM76.8 171.8h2.8v1.3h-2.8zM76.6 169.5h1.3v4.2h-1.3zM78.3 169.5h1.3v4.2h-1.3z" fill="#c4c4c4" opacity="1.0"/>
<path d="M74.6 201.2h1.3v4.5h-1.3zM74.5 202.1h1.8v1.3h-1.8zM74.5 203.6h1.5v1.3h-1.5zM76.8 200.8h2.5v1.3h-2.5zM76.8 204.8h2.5v1.3h-2.5zM76.1 201.5h1.3v4.0h-1.3zM78.6 201.5h1.3v4.0h-1.3zM76.8 202.8h2.5v1.3h-2.5z" fill="#c4c4c4" opacity="1.0"/>
<path d="M74.8 207.0h1.3v5.0h-1.3zM74.5 207.8h2.0v1.3h-2.0zM77.0 207.1h2.5v1.3h-2.5zM77.0 208.8h2.5v1.3h-2.5zM76.8 210.8h2.8v1.3h-2.8zM77.6 207.8h1.3v3.6h-1.3z" fill="#c4c4c4" opacity="1.0"/>
<path d="M74.9 212.9h4.2v1.3h-4.2zM74.9 216.8h4.2v1.3h-4.2zM74.2 213.6h1.3v3.8h-1.3zM78.4 213.6h1.3v3.8h-1.3zM74.9 214.8h4.2v1.3h-4.2zM76.3 213.6h1.3v3.8h-1.3z" fill="#c4c4c4" opacity="1.0"/>
<path d="M74.6 246.2h1.3v4.5h-1.3zM74.5 247.1h1.8v1.3h-1.8zM74.5 248.6h1.5v1.3h-1.5zM76.8 245.8h2.5v1.3h-2.5zM76.8 249.8h2.5v1.3h-2.5zM76.1 246.5h1.3v4.0h-1.3zM78.6 246.5h1.3v4.0h-1.3zM76.8 247.8h2.5v1.3h-2.5z" fill="#c4c4c4" opacity="1.0"/>
<path d="M74.8 252.3h1.5v1.3h-1.5zM74.8 255.3h1.5v1.3h-1.5zM74.1 253.0h1.3v3.0h-1.3zM75.6 253.0h1.3v3.0h-1.3zM76.8 251.8h2.8v1.3h-2.8zM76.8 253.3h2.8v1.3h-2.8zM76.8 254.8h2.8v1.3h-2.8zM76.6 252.5h1.3v4.2h-1.3zM78.3 252.5h1.3v4.2h-1.3z" fill="#c4c4c4" opacity="1.0"/>
<path d="M74.5 258.9h5.0v1.3h-5.0zM76.3 258.0h1.3v5.0h-1.3zM75.2 260.6h3.5v1.3h-3.5zM74.8 261.2h1.3v1.5h-1.3zM77.8 261.2h1.3v1.5h-1.3z" fill="#c4c4c4" opacity="1.0"/>
<path d="M74.8 290.4h1.5v1.3h-1.5zM74.8 293.4h1.5v1.3h-1.5zM74.1 291.0h1.3v3.0h-1.3zM75.6 291.0h1.3v3.0h-1.3zM76.8 289.9h2.8v1.3h-2.8zM76.8 291.4h2.8v1.3h-2.8zM76.8 292.9h2.8v1.3h-2.8zM76.6 290.5h1.3v4.2h-1.3zM78.3 290.5h1.3v4.2h-1.3z" fill="#c4c4c4" opacity="1.0"/>
<path d="M74.8 295.9h2.0v1.3h-2.0zM74.8 299.9h2.0v1.3h-2.0zM74.1 296.5h1.3v4.0h-1.3zM76.1 296.5h1.3v4.0h-1.3zM74.8 297.9h2.0v1.3h-2.0zM77.2 295.9h2.0v1.3h-2.0zM77.2 299.9h2.0v1.3h-2.0zM76.6 296.5h1.3v4.0h-1.3zM78.6 296.5h1.3v4.0h-1.3zM77.6 296.5h1.3v4.0h-1.3z" fill="#c4c4c4" opacity="1.0"/>
<path d="M74.5 302.9h5.0v1.3h-5.0zM76.3 302.0h1.3v5.0h-1.3zM75.2 304.6h3.5v1.3h-3.5zM74.8 305.2h1.3v1.5h-1.3zM77.8 305.2h1.3v1.5h-1.3z" fill="#c4c4c4" opacity="1.0"/>
<path d="M74.6 335.2h1.3v4.5h-1.3zM74.5 336.1h1.8v1.3h-1.8zM74.5 337.6h1.5v1.3h-1.5zM76.8 334.9h2.5v1.3h-2.5zM76.8 338.9h2.5v1.3h-2.5zM76.1 335.5h1.3v4.0h-1.3zM78.6 335.5h1.3v4.0h-1.3zM76.8 336.9h2.5v1.3h-2.5z" fill="#c4c4c4" opacity="1.0"/>
<path d="M74.8 341.0h1.3v5.0h-1.3zM74.5 341.9h2.0v1.3h-2.0zM77.0 341.1h2.5v1.3h-2.5zM77.0 342.9h2.5v1.3h-2.5zM76.8 344.8h2.8v1.3h-2.8zM77.6 341.8h1.3v3.6h-1.3z" fill="#c4c4c4" opacity="1.0"/>
<path d="M74.9 347.0h4.2v1.3h-4.2zM74.9 350.8h4.2v1.3h-4.2zM74.2 347.6h1.3v3.8h-1.3zM78.4 347.6h1.3v3.8h-1.3zM74.9 348.9h4.2v1.3h-4.2zM76.3 347.6h1.3v3.8h-1.3z" fill="#c4c4c4" opacity="1.0"/>
<path d="M74.9 380.0h4.2v1.3h-4.2zM74.9 383.8h4.2v1.3h-4.2zM74.2 380.6h1.3v3.8h-1.3zM78.4 380.6h1.3v3.8h-1.3zM74.9 381.9h4.2v1.3h-4.2zM76.3 380.6h1.3v3.8h-1.3z" fill="#c4c4c4" opacity="1.0"/>
<path d="M74.5 386.9h5.0v1.3h-5.0zM76.3 386.0h1.3v5.0h-1.3zM75.2 388.6h3.5v1.3h-3.5zM74.8 389.2h1.3v1.5h-1.3zM77.8 389.2h1.3v1.5h-1.3z" fill="#c4c4c4" opacity="1.0"/>
<path d="M74.8 392.0h1.3v5.0h-1.3zM74.5 392.9h2.0v1.3h-2.0zM77.0 392.1h2.5v1.3h-2.5zM77.0 393.9h2.5v1.3h-2.5zM76.8 395.8h2.8v1.3h-2.8zM77.6 392.8h1.3v3.6h-1.3z" fill="#c4c4c4" opacity="1.0"/>
<path d="M74.8 424.0h1.3v5.0h-1.3zM74.5 424.9h2.0v1.3h-2.0zM77.0 424.1h2.5v1.3h-2.5zM77.0 425.9h2.5v1.3h-2.5zM76.8 427.8h2.8v1.3h-2.8zM77.6 424.8h1.3v3.6h-1.3z" fill="#c4c4c4" opacity="1.0"/>
<path d="M74.8 429.8h4.5v1.3h-4.5zM75.5 430.8h3.0v1.3h-3.0zM75.5 432.5h3.0v1.3h-3.0zM74.8 431.4h1.3v1.7h-1.3zM77.8 431.4h1.3v1.7h-1.3zM74.5 433.9h5.0v1.3h-5.0zM76.3 433.1h1.3v1.6h-1.3z" fill="#c4c4c4" opacity="1.0"/>
<path d="M74.5 436.9h5.0v1.3h-5.0zM76.3 436.0h1.3v5.0h-1.3zM75.2 438.6h3.5v1.3h-3.5zM74.8 439.2h1.3v1.5h-1.3zM77.8 439.2h1.3v1.5h-1.3z" fill="#c4c4c4" opacity="1.0"/>
<path d="M74.8 468.8h4.5v1.3h-4.5zM75.5 469.8h3.0v1.3h-3.0zM75.5 471.5h3.0v1.3h-3.0zM74.8 470.4h1.3v1.7h-1.3zM77.8 470.4h1.3v1.7h-1.3zM74.5 472.9h5.0v1.3h-5.0zM76.3 472.1h1.3v1.6h-1.3z" fill="#c4c4c4" opacity="1.0"/>
<path d="M74.8 475.0h1.3v5.0h-1.3zM74.5 475.9h2.0v1.3h-2.0zM77.0 475.1h2.5v1.3h-2.5zM77.0 476.9h2.5v1.3h-2.5zM76.8 478.8h2.8v1.3h-2.8zM77.6 475.8h1.3v3.6h-1.3z" fill="#c4c4c4" opacity="1.0"/>
<path d="M75.0 481.0h4.0v1.3h-4.0zM75.3 481.0h1.3v1.8h-1.3zM77.3 481.0h1.3v1.8h-1.3zM75.2 482.6h3.5v1.3h-3.5zM75.2 485.0h3.5v1.3h-3.5zM74.6 483.2h1.3v2.4h-1.3zM78.1 483.2h1.3v2.4h-1.3zM75.2 483.8h3.5v1.3h-3.5z" fill="#c4c4c4" opacity="1.0"/>
<path d="M74.8 513.4h1.5v1.3h-1.5zM74.8 516.4h1.5v1.3h-1.5zM74.1 514.0h1.3v3.0h-1.3zM75.6 514.0h1.3v3.0h-1.3zM76.8 512.9h2.8v1.3h-2.8zM76.8 514.4h2.8v1.3h-2.8zM76.8 515.9h2.8v1.3h-2.8zM76.6 513.5h1.3v4.2h-1.3zM78.3 513.5h1.3v4.2h-1.3z" fill="#c4c4c4" opacity="1.0"/>
<path d="M74.8 519.0h1.3v5.0h-1.3zM74.5 519.9h2.0v1.3h-2.0zM77.0 519.1h2.5v1.3h-2.5zM77.0 520.9h2.5v1.3h-2.5zM76.8 522.8h2.8v1.3h-2.8zM77.6 519.8h1.3v3.6h-1.3z" fill="#c4c4c4" opacity="1.0"/>
<path d="M74.8 524.9h2.0v1.3h-2.0zM74.8 528.9h2.0v1.3h-2.0zM74.1 525.5h1.3v4.0h-1.3zM76.1 525.5h1.3v4.0h-1.3zM74.8 526.9h2.0v1.3h-2.0zM77.2 524.9h2.0v1.3h-2.0zM77.2 528.9h2.0v1.3h-2.0zM76.6 525.5h1.3v4.0h-1.3zM78.6 525.5h1.3v4.0h-1.3zM77.6 525.5h1.3v4.0h-1.3z" fill="#c4c4c4" opacity="1.0"/>
<path d="M74.8 557.9h2.0v1.3h-2.0zM74.8 561.9h2.0v1.3h-2.0zM74.1 558.5h1.3v4.0h-1.3zM76.1 558.5h1.3v4.0h-1.3zM74.8 559.9h2.0v1.3h-2.0zM77.2 557.9h2.0v1.3h-2.0zM77.2 561.9h2.0v1.3h-2.0zM76.6 558.5h1.3v4.0h-1.3zM78.6 558.5h1.3v4.0h-1.3zM77.6 558.5h1.3v4.0h-1.3z" fill="#c4c4c4" opacity="1.0"/>
<path d="M74.6 564.2h1.3v4.5h-1.3zM74.5 565.1h1.8v1.3h-1.8zM74.5 566.6h1.5v1.3h-1.5zM76.8 563.9h2.5v1.3h-2.5zM76.8 567.9h2.5v1.3h-2.5zM76.1 564.5h1.3v4.0h-1.3zM78.6 564.5h1.3v4.0h-1.3zM76.8 565.9h2.5v1.3h-2.5z" fill="#c4c4c4" opacity="1.0"/>
<path d="M74.9 570.0h4.2v1.3h-4.2zM74.9 573.8h4.2v1.3h-4.2zM74.2 570.6h1.3v3.8h-1.3zM78.4 570.6h1.3v3.8h-1.3zM74.9 571.9h4.2v1.3h-4.2zM76.3 570.6h1.3v3.8h-1.3z" fill="#c4c4c4" opacity="1.0"/>
<path d="M74.8 602.9h2.0v1.3h-2.0zM74.8 606.9h2.0v1.3h-2.0zM74.1 603.5h1.3v4.0h-1.3zM76.1 603.5h1.3v4.0h-1.3zM74.8 604.9h2.0v1.3h-2.0zM77.2 602.9h2.0v1.3h-2.0zM77.2 606.9h2.0v1.3h-2.0zM76.6 603.5h1.3v4.0h-1.3zM78.6 603.5h1.3v4.0h-1.3zM77.6 603.5h1.3v4.0h-1.3z" fill="#c4c4c4" opacity="1.0"/>
<path d="M74.5 609.9h5.0v1.3h-5.0zM76.3 609.0h1.3v5.0h-1.3zM75.2 611.6h3.5v1.3h-3.5zM74.8 612.2h1.3v1.5h-1.3zM77.8 612.2h1.3v1.5h-1.3z" fill="#c4c4c4" opacity="1.0"/>
<path d="M74.5 615.9h5.0v1.3h-5.0zM76.3 615.0h1.3v5.0h-1.3zM75.2 617.6h3.5v1.3h-3.5zM74.8 618.2h1.3v1.5h-1.3zM77.8 618.2h1.3v1.5h-1.3z" fill="#c4c4c4" opacity="1.0"/>
<path d="M74.5 647.9h5.0v1.3h-5.0zM76.3 647.0h1.3v5.0h-1.3zM75.2 649.6h3.5v1.3h-3.5zM74.8 650.2h1.3v1.5h-1.3zM77.8 650.2h1.3v1.5h-1.3z" fill="#c4c4c4" opacity="1.0"/>
<path d="M75.0 653.0h4.0v1.3h-4.0zM75.3 653.0h1.3v1.8h-1.3zM77.3 653.0h1.3v1.8h-1.3zM75.2 654.6h3.5v1.3h-3.5zM75.2 657.0h3.5v1.3h-3.5zM74.6 655.2h1.3v2.4h-1.3zM78.1 655.2h1.3v2.4h-1.3zM75.2 655.8h3.5v1.3h-3.5z" fill="#c4c4c4" opacity="1.0"/>
<path d="M74.5 659.9h5.0v1.3h-5.0zM76.3 659.0h1.3v5.0h-1.3zM75.2 661.6h3.5v1.3h-3.5zM74.8 662.2h1.3v1.5h-1.3zM77.8 662.2h1.3v1.5h-1.3z" fill="#c4c4c4" opacity="1.0"/>
<path d="M74.8 691.8h4.5v1.3h-4.5zM75.5 692.8h3.0v1.3h-3.0zM75.5 694.5h3.0v1.3h-3.0zM74.8 693.4h1.3v1.7h-1.3zM77.8 693.4h1.3v1.7h-1.3zM74.5 695.9h5.0v1.3h-5.0zM76.3 695.1h1.3v1.6h-1.3z" fill="#c4c4c4" opacity="1.0"/>
<path d="M74.6 698.2h1.3v4.5h-1.3zM74.5 699.1h1.8v1.3h-1.8zM74.5 700.6h1.5v1.3h-1.5zM76.8 697.9h2.5v1.3h-2.5zM76.8 701.9h2.5v1.3h-2.5zM76.1 698.5h1.3v4.0h-1.3zM78.6 698.5h1.3v4.0h-1.3zM76.8 699.9h2.5v1.3h-2.5z" fill="#c4c4c4" opacity="1.0"/>
<path d="M74.8 703.8h4.5v1.3h-4.5zM75.5 704.8h3.0v1.3h-3.0zM75.5 706.5h3.0v1.3h-3.0zM74.8 705.4h1.3v1.7h-1.3zM77.8 705.4h1.3v1.7h-1.3zM74.5 707.9h5.0v1.3h-5.0zM76.3 707.1h1.3v1.6h-1.3z" fill="#c4c4c4" opacity="1.0"/>
<path d="M74.5 736.9h5.0v1.3h-5.0zM76.3 736.0h1.3v5.0h-1.3zM75.2 738.6h3.5v1.3h-3.5zM74.8 739.2h1.3v1.5h-1.3zM77.8 739.2h1.3v1.5h-1.3z" fill="#c4c4c4" opacity="1.0"/>
<path d="M74.5 742.9h5.0v1.3h-5.0zM76.3 742.0h1.3v5.0h-1.3zM75.2 744.6h3.5v1.3h-3.5zM74.8 745.2h1.3v1.5h-1.3zM77.8 745.2h1.3v1.5h-1.3z" fill="#c4c4c4" opacity="1.0"/>
<path d="M74.8 748.4h1.5v1.3h-1.5zM74.8 751.4h1.5v1.3h-1.5zM74.1 749.0h1.3v3.0h-1.3zM75.6 749.0h1.3v3.0h-1.3zM76.8 747.9h2.8v1.3h-2.8zM76.8 749.4h2.8v1.3h-2.8zM76.8 750.9h2.8v1.3h-2.8zM76.6 748.5h1.3v4.2h-1.3zM78.3 748.5h1.3v4.2h-1.3z" fill="#c4c4c4" opacity="1.0"/>
<path d="M74.8 780.9h2.0v1.3h-2.0zM74.8 784.9h2.0v1.3h-2.0zM74.1 781.5h1.3v4.0h-1.3zM76.1 781.5h1.3v4.0h-1.3zM74.8 782.9h2.0v1.3h-2.0zM77.2 780.9h2.0v1.3h-2.0zM77.2 784.9h2.0v1.3h-2.0zM76.6 781.5h1.3v4.0h-1.3zM78.6 781.5h1.3v4.0h-1.3zM77.6 781.5h1.3v4.0h-1.3z" fill="#c4c4c4" opacity="1.0"/>
<path d="M74.6 787.2h1.3v4.5h-1.3zM74.5 788.1h1.8v1.3h-1.8zM74.5 789.6h1.5v1.3h-1.5zM76.8 786.9h2.5v1.3h-2.5zM76.8 790.9h2.5v1.3h-2.5zM76.1 787.5h1.3v4.0h-1.3zM78.6 787.5h1.3v4.0h-1.3zM76.8 788.9h2.5v1.3h-2.5z" fill="#c4c4c4" opacity="1.0"/>
<path d="M75.0 793.0h4.0v1.3h-4.0zM75.3 793.0h1.3v1.8h-1.3zM77.3 793.0h1.3v1.8h-1.3zM75.2 794.6h3.5v1.3h-3.5zM75.2 797.0h3.5v1.3h-3.5zM74.6 795.2h1.3v2.4h-1.3zM78.1 795.2h1.3v2.4h-1.3zM75.2 795.8h3.5v1.3h-3.5z" fill="#c4c4c4" opacity="1.0"/>
<path d="M74.8 826.4h1.5v1.3h-1.5zM74.8 829.4h1.5v1.3h-1.5zM74.1 827.0h1.3v3.0h-1.3zM75.6 827.0h1.3v3.0h-1.3zM76.8 825.9h2.8v1.3h-2.8zM76.8 827.4h2.8v1.3h-2.8zM76.8 828.9h2.8v1.3h-2.8zM76.6 826.5h1.3v4.2h-1.3zM78.3 826.5h1.3v4.2h-1.3z" fill="#c4c4c4" opacity="1.0"/>
<path d="M74.9 832.0h4.2v1.3h-4.2zM74.9 835.8h4.2v1.3h-4.2zM74.2 832.6h1.3v3.8h-1.3zM78.4 832.6h1.3v3.8h-1.3zM74.9 833.9h4.2v1.3h-4.2zM76.3 832.6h1.3v3.8h-1.3z" fill="#c4c4c4" opacity="1.0"/>
<path d="M74.8 838.4h1.5v1.3h-1.5zM74.8 841.4h1.5v1.3h-1.5zM74.1 839.0h1.3v3.0h-1.3zM75.6 839.0h1.3v3.0h-1.3zM76.8 837.9h2.8v1.3h-2.8zM76.8 839.4h2.8v1.3h-2.8zM76.8 840.9h2.8v1.3h-2.8zM76.6 838.5h1.3v4.2h-1.3zM78.3 838.5h1.3v4.2h-1.3z" fill="#c4c4c4" opacity="1.0"/>
<rect x="3" y="77" width="67" height="423" fill="#545454" />
<rect x="3" y="500" width="67" height="1" fill="#434343" />
<rect x="3" y="501" width="67" height="361" fill="#5a5a5a" />
<rect x="3" y="76" width="67" height="1" fill="#2e2e2e" />
<rect x="3" y="77" width="67" height="1" fill="#666666" />
<rect x="3" y="77" width="1" height="785" fill="#5a5a5a" />
<rect x="6" y="67" width="6" height="6" fill="#3a3a3a" />
<text x="8" y="73" font-family="Liberation Sans" font-size="7" font-weight="bold" fill="#d8d8d8" >»</text>
<rect x="10" y="91" width="5" height="4" fill="#d8d8d8" />
<rect x="10" y="130" width="24" height="22" fill="#4c4c4c" />
<path d="M13 108 h4 l4 5 l-4 3 h-4 z M21 113 l8 -5 M21 113 l9 9" fill="none" stroke="#e8e8e8" stroke-width="2.2" />
<ellipse cx="51" cy="114" rx="7.5" ry="7" fill="none" stroke="#e8e8e8" stroke-width="2.2"/>
<path d="M46 109 l10 10" fill="none" stroke="#e8e8e8" stroke-width="2.2" />
<rect x="61" y="120" width="3" height="3" fill="#d8d8d8" />
<path d="M15 134 v13 h14 M15 134 h11 M15 140.5 h10" fill="none" stroke="#e8e8e8" stroke-width="2.4" />
<path d="M45 139 l5 -5 l1 4 q9 -1 9 8 v6 M46 138 h6" fill="none" stroke="#e8e8e8" stroke-width="2.4" />
<path d="M14 168 l6 -5 l5 3 l-6 5 M20 171 l10 4 v4" fill="none" stroke="#e8e8e8" stroke-width="2.4" />
<path d="M21 172 l9 3 v5 l-10 -3z" fill="#e8e8e8" />
<path d="M44 163 h9 v10 h-8 M52 168 h-6" fill="none" stroke="#e8e8e8" stroke-width="2.4" />
<rect x="58" y="175" width="3" height="3" fill="#d8d8d8" />
<path d="M15 189 h12 v5 h-5 v7 h7 v3 h-17 v-3 h7 v-7 h-4 z" fill="#e8e8e8" />
<path d="M44 189 h15 v14 h-15 z M47 193 v3 h4 v-3 z M53 196 v4 h3 v-4z" fill="#e8e8e8" fill-rule="evenodd"/>
<rect x="62" y="204" width="3" height="3" fill="#d8d8d8" />
<path d="M14 216 h13 l-1 14 h-11 z M18 220 v6 h6 v-6z" fill="#e8e8e8" fill-rule="evenodd"/>
<rect x="30" y="230" width="3" height="3" fill="#d8d8d8" />
<path d="M45 230 v-7 l7 -7 l6 6 v8 z" fill="none" stroke="#e8e8e8" stroke-width="2.3" />
<rect x="62" y="230" width="3" height="3" fill="#d8d8d8" />
<path d="M15 246 q6 -5 13 0 M17 247 v9 h8 v-9 M19 251 h4" fill="none" stroke="#e8e8e8" stroke-width="2.3" />
<rect x="31" y="256" width="3" height="3" fill="#d8d8d8" />
<path d="M44 253 l9 -10 l7 3 l-9 12 l-7 -1z M48 253 l5 -6 l3 2 l-5 5z" fill="#e8e8e8" fill-rule="evenodd"/>
<rect x="61" y="258" width="3" height="3" fill="#d8d8d8" />
<path d="M13 284 l14 -14 l3 3 l-14 13 z" fill="#e8e8e8" />
<rect x="28" y="283" width="3" height="3" fill="#d8d8d8" />
<path d="M44 284 l3 -8 q3 -7 10 -5 q5 3 0 9 z M49 279 l4 -5 q2 0 1 3z" fill="#e8e8e8" fill-rule="evenodd"/>
<rect x="61" y="282" width="3" height="3" fill="#d8d8d8" />
<path d="M21 297 q-1 8 -8 13 M20 303 q4 5 9 7 M13 311.5 h17" fill="none" stroke="#e8e8e8" stroke-width="2.4" />
<path d="M44 297 h15 v14 h-15 z M47 300 v8 h9 v-8z" fill="#e8e8e8" fill-rule="evenodd"/>
<path d="M49 302 h5 v4 h-5z" fill="#cfcfcf" />
<rect x="61" y="310" width="3" height="3" fill="#d8d8d8" />
<path d="M14 323 q7 -2 14 0 q1 7 -2 11 h-10 q-3 -4 -2 -11z" fill="#e8e8e8" />
<path d="M17 326 h8 v2 h-8z" fill="#666" />
<rect x="30" y="334" width="3" height="3" fill="#d8d8d8" />
<path d="M45 334 q0 -8 6 -12 q7 -3 9 3 q0 6 -6 8 q-5 3 -9 1z M50 330 q2 -4 5 -3 q0 3 -4 4z" fill="#e8e8e8" fill-rule="evenodd"/>
<rect x="61" y="335" width="3" height="3" fill="#d8d8d8" />
<path d="M14 350 l7 -2 l7 3 l-1 9 l-12 -2z" fill="#dcdcdc" />
<rect x="28" y="361" width="3" height="3" fill="#d8d8d8" />
<path d="M44 347 h13 v15 h-13z M47 350 v2 h7 v-2z M47 355 v4 h3 v-4z M51 355 v4 h3 v-4z" fill="#e8e8e8" fill-rule="evenodd"/>
<rect x="59" y="354" width="4" height="1.5" fill="#cfcfcf" />
<path d="M13 374 l17 7 l-13 8 q2 -7 -4 -15z" fill="#e8e8e8" />
<path d="M45 389 l10 -12 v10 l-10 2 M53 374 v4" fill="none" stroke="#e8e8e8" stroke-width="2.3" />
<rect x="61" y="389" width="3" height="3" fill="#d8d8d8" />
<path d="M13 401 h13 v9 h-4 v6 h-6 v-6 h-3z" fill="#d8d8d8" />
<rect x="28" y="413" width="3" height="3" fill="#d8d8d8" />
<path d="M43 404 l5 -4 l6 3 l7 6 l-2 7 l-8 -3 l-8 -2z" fill="#dcdcdc" />
<rect x="11" y="429" width="24" height="25" fill="#000" stroke="#f2f2f2" stroke-width="2"/>
<path d="M35 441 h13 v9 h9 v25 h-26 v-12 h-9 v-8 h13z" fill="#ffffff" />
<rect x="10" y="455" width="1" height="20" fill="#454545" />
<rect x="10" y="475" width="48" height="1" fill="#454545" />
<rect x="11" y="429" width="24" height="25" fill="#000" stroke="#f2f2f2" stroke-width="2"/>
<path d="M41 434 h6" fill="none" stroke="#dcdcdc" stroke-width="1.3" />
<path d="M51 428 l3 0 l3 10 h-2 l-1 -3 h-2 l-1 3 h-2z" fill="#e8e8e8" />
<rect x="13" y="481" width="18" height="12" fill="#ffffff" />
<rect x="16" y="483" width="4" height="8" fill="#111" />
<rect x="23" y="483" width="4" height="8" fill="#111" />
<path d="M42 483 l4 2 l4 -1 l8 -2 v10 l-8 -1 l-8 1z" fill="#d0d0d0" />
<rect x="308" y="240" width="1.6" height="16" fill="#b0b0b0" />
<rect x="309" y="247.3" width="158" height="1.4" fill="#b0b0b0" />
<rect x="467" y="247.5" width="12" height="1" fill="#cfcfcf" />
<path d="M485 244 l2 -2 v11 M482 248 h6 M490 244 h6 l-3 9" fill="none" stroke="#9c9c9c" stroke-width="1.3" />
<rect x="498" y="247.5" width="12" height="1" fill="#cfcfcf" />
<rect x="510" y="247.3" width="160" height="1.4" fill="#b0b0b0" />
<rect x="670" y="240" width="1.6" height="16" fill="#b0b0b0" />
<rect x="671" y="246.8" width="48" height="1.6" fill="#b0b0b0" />
<path d="M727 247.5 l-9 -5 v10 z" fill="#b0b0b0" />
<rect x="724.5" y="248" width="1.4" height="53" fill="#b0b0b0" />
<rect x="718" y="300" width="12" height="1.5" fill="#b0b0b0" />
<rect x="249" y="301" width="14" height="1.3" fill="#b0b0b0" />
<rect x="255" y="301" width="1.4" height="158" fill="#b0b0b0" />
<path d="M255.8 466 l-5.5 9 h11 z" fill="#b0b0b0" />
<rect x="255" y="476" width="1.4" height="8" fill="#b0b0b0" />
<rect x="255" y="485" width="1.4" height="155" fill="#b0b0b0" />
<rect x="248" y="640" width="15" height="1.3" fill="#b0b0b0" />
<path d="M253 697.5 l9 -5 v10 z" fill="#b0b0b0" />
<rect x="261" y="696.6" width="47" height="1.4" fill="#b0b0b0" />
<rect x="308" y="689" width="1.6" height="15" fill="#b0b0b0" />
<rect x="309" y="696.8" width="158" height="1.4" fill="#b0b0b0" />
<rect x="467" y="697" width="16" height="1" fill="#d0d0d0" />
<rect x="486" y="692" width="2.2" height="11" fill="#9a9a9a" />
<rect x="488" y="702" width="6" height="1" fill="#b8b8b8" />
<rect x="491" y="694" width="3" height="2" fill="#9a9a9a" />
<rect x="500" y="697" width="14" height="1" fill="#d0d0d0" />
<rect x="510" y="696.8" width="160" height="1.4" fill="#b0b0b0" />
<rect x="670" y="689" width="1.6" height="15" fill="#b0b0b0" />
<rect x="717" y="640.5" width="13" height="1.5" fill="#b0b0b0" />
<rect x="724.5" y="641" width="1.4" height="53" fill="#b0b0b0" />
<rect x="306" y="300" width="366" height="341" fill="none" stroke="#8fe0ff" stroke-width="1" opacity="0.8"/>
<rect x="398" y="300" width="2" height="4" fill="#ffffff" />
<rect x="579" y="300" width="2" height="4" fill="#ffffff" />
<rect x="398" y="637" width="2" height="4" fill="#ffffff" />
<rect x="579" y="637" width="2" height="4" fill="#ffffff" />
<rect x="306" y="383" width="4" height="2" fill="#ffffff" />
<rect x="306" y="556" width="4" height="2" fill="#ffffff" />
<rect x="668" y="383" width="4" height="2" fill="#ffffff" />
<rect x="668" y="556" width="4" height="2" fill="#ffffff" />
<path d="M480.5 297.5 h18 v4 l-9 10 l-9 -10 z" fill="#f4fcff" stroke="#215d80" stroke-width="1.6"/>
<path d="M480.5 643.5 h18 v-4 l-9 -10 l-9 10 z" fill="#f4fcff" stroke="#215d80" stroke-width="1.6"/>
<path d="M303.5 463.5 v17 h5 q9 -3 10 -8.5 q-1 -5.5 -10 -8.5 z" fill="#f4fcff" stroke="#215d80" stroke-width="1.6"/>
<path d="M675.5 463.5 v17 h-5 q-9 -3 -10 -8.5 q1 -5.5 10 -8.5 z" fill="#f4fcff" stroke="#215d80" stroke-width="1.6"/>
<rect x="884" y="106" width="1" height="741" fill="#3a3a3a" />
<rect x="884" y="106" width="3" height="741" fill="#333333" />
<rect x="902" y="106" width="1" height="741" fill="#353535" />
<rect x="887" y="357" width="14" height="244" fill="url(#vthumb)" />
<rect x="885" y="830" width="17" height="1" fill="#5a5a5a" />
<rect x="891" y="834" width="5" height="2" fill="#cfcfcf" />
<rect x="72" y="846" width="831" height="1" fill="#3a3a3a" />
<rect x="72" y="847" width="812" height="15" fill="#585858" />
<rect x="72" y="847" width="45" height="15" fill="#525252" />
<rect x="306" y="847" width="578" height="15" fill="#4b4b4b" />
<path d="M80.5 850.1h3.0v1.8h-3.0zM80.5 856.1h3.0v1.8h-3.0zM79.6 851.0h1.8v6.0h-1.8zM82.6 851.0h1.8v6.0h-1.8zM84.5 849.1h5.5v1.8h-5.5zM84.5 852.1h5.5v1.8h-5.5zM84.5 855.1h5.5v1.8h-5.5zM84.6 850.0h1.8v8.5h-1.8zM88.1 850.0h1.8v8.5h-1.8zM91.5 849.3h8.0v1.8h-8.0zM92.6 849.0h1.8v3.5h-1.8zM96.6 849.0h1.8v3.5h-1.8zM92.0 852.6h7.0v1.8h-7.0zM92.0 857.3h7.0v1.8h-7.0zM91.1 853.5h1.8v4.7h-1.8zM98.1 853.5h1.8v4.7h-1.8zM92.0 854.9h7.0v1.8h-7.0zM102.0 849.3h8.0v1.8h-8.0zM103.1 849.0h1.8v3.5h-1.8zM107.1 849.0h1.8v3.5h-1.8zM102.5 852.6h7.0v1.8h-7.0zM102.5 857.3h7.0v1.8h-7.0zM101.6 853.5h1.8v4.7h-1.8zM108.6 853.5h1.8v4.7h-1.8zM102.5 854.9h7.0v1.8h-7.0z" fill="#e6e6e6" opacity="1.0"/>
<rect x="117" y="848" width="1" height="13" fill="#3c3c3c" />
<path d="M121.4 850.9h2.4v1.4h-2.4zM121.4 855.7h2.4v1.4h-2.4zM120.7 851.6h1.4v4.8h-1.4zM123.1 851.6h1.4v4.8h-1.4zM124.6 850.1h4.4v1.4h-4.4zM124.6 852.5h4.4v1.4h-4.4zM124.6 854.9h4.4v1.4h-4.4zM124.7 850.8h1.4v6.8h-1.4zM127.5 850.8h1.4v6.8h-1.4z" fill="#bdbdbd" opacity="0.7"/>
<rect x="131" y="848" width="1" height="13" fill="#3c3c3c" />
<path d="M166.6 849.5h1.9v9.4h-1.9zM166.0 851.7h3.7v1.9h-3.7zM166.0 854.9h3.1v1.9h-3.1zM170.7 849.1h5.2v1.9h-5.2zM170.7 857.5h5.2v1.9h-5.2zM169.8 850.0h1.9v8.4h-1.9zM175.0 850.0h1.9v8.4h-1.9zM170.7 853.3h5.2v1.9h-5.2zM179.0 849.0h1.9v10.5h-1.9zM177.8 851.2h4.2v1.9h-4.2zM183.1 849.6h5.2v1.9h-5.2zM183.1 853.3h5.2v1.9h-5.2zM182.5 857.3h5.8v1.9h-5.8zM184.7 850.6h1.9v7.7h-1.9zM190.8 849.0h1.9v10.5h-1.9zM189.6 851.2h4.2v1.9h-4.2zM194.8 849.6h5.2v1.9h-5.2zM194.8 853.3h5.2v1.9h-5.2zM194.3 857.3h5.8v1.9h-5.8zM196.5 850.6h1.9v7.7h-1.9zM201.9 848.9h9.4v1.9h-9.4zM203.5 851.0h6.3v1.9h-6.3zM203.5 854.6h6.3v1.9h-6.3zM202.6 851.9h1.9v3.6h-1.9zM208.9 851.9h1.9v3.6h-1.9zM201.4 857.5h10.5v1.9h-10.5zM205.7 855.5h1.9v3.5h-1.9zM214.0 849.3h8.8v1.9h-8.8zM214.0 857.3h8.8v1.9h-8.8zM213.1 850.3h1.9v8.0h-1.9zM221.9 850.3h1.9v8.0h-1.9zM214.0 853.3h8.8v1.9h-8.8zM217.5 850.3h1.9v8.0h-1.9zM225.5 850.2h3.1v1.9h-3.1zM225.5 856.5h3.1v1.9h-3.1zM224.6 851.1h1.9v6.3h-1.9zM227.7 851.1h1.9v6.3h-1.9zM229.7 849.1h5.8v1.9h-5.8zM229.7 852.3h5.8v1.9h-5.8zM229.7 855.4h5.8v1.9h-5.8zM229.8 850.0h1.9v8.9h-1.9zM233.5 850.0h1.9v8.9h-1.9zM237.3 849.1h4.2v1.9h-4.2zM237.3 857.5h4.2v1.9h-4.2zM236.4 850.0h1.9v8.4h-1.9zM240.6 850.0h1.9v8.4h-1.9zM237.3 853.3h4.2v1.9h-4.2zM242.6 849.1h4.2v1.9h-4.2zM242.6 857.5h4.2v1.9h-4.2zM241.6 850.0h1.9v8.4h-1.9zM245.8 850.0h1.9v8.4h-1.9zM243.7 850.0h1.9v8.4h-1.9z" fill="#e8e8e8" opacity="1.0"/>
<rect x="283" y="848" width="1" height="13" fill="#3c3c3c" />
<path d="M289 856 l4 -2 l-4 -2 M296 850 v9" fill="none" stroke="#dcdcdc" stroke-width="1.4" />
<rect x="305" y="848" width="1" height="13" fill="#3c3c3c" />
<rect x="460" y="848" width="188" height="12" fill="url(#thumb)" />
<rect x="862" y="852" width="3" height="3" fill="#8a8a8a" />
<rect x="876" y="849" width="1" height="10" fill="#6a6a6a" />
<rect x="0" y="862" width="1152" height="2" fill="#2a2a2a" />
<rect x="903" y="77" width="38" height="787" fill="#4a4a4a" />
<rect x="905" y="77" width="35" height="38" fill="#575757" />
<rect x="905" y="77" width="35" height="1" fill="#5f5f5f" />
<rect x="905" y="118" width="35" height="30" fill="#575757" />
<rect x="905" y="118" width="35" height="1" fill="#5f5f5f" />
<rect x="905" y="151" width="35" height="32" fill="#575757" />
<rect x="905" y="151" width="35" height="1" fill="#5f5f5f" />
<rect x="905" y="186" width="35" height="32" fill="#575757" />
<rect x="905" y="186" width="35" height="1" fill="#5f5f5f" />
<rect x="905" y="221" width="35" height="33" fill="#575757" />
<rect x="905" y="221" width="35" height="1" fill="#5f5f5f" />
<rect x="905" y="257" width="35" height="32" fill="#575757" />
<rect x="905" y="257" width="35" height="1" fill="#5f5f5f" />
<rect x="905" y="292" width="35" height="571" fill="#575757" />
<rect x="905" y="292" width="35" height="1" fill="#5f5f5f" />
<rect x="940" y="64" width="3" height="800" fill="#2e2e2e" />
<path d="M915 96 l4 -5 l5 2 l6 5 v9 h-15z M921 100 h5 v7 h-5z" fill="#e6e6e6" fill-rule="evenodd"/>
<path d="M914 131 l6 -1 l8 -1 l2 -2 l2 3 l-1 4 h-4 v3 l-4 -1 h-9z" fill="#e2e2e2" />
<path d="M915 158 h4 v7 l2 -3 q2 -3 6 -3 h4 v13 h-16z M922 167 q2 -4 6 -4 v6 h-6z" fill="#e6e6e6" fill-rule="evenodd"/>
<path d="M913 208 l4 -6 l5 -2 v-5 l4 2 l4 6 l2 5 h-7 l-3 -2 l-4 2z" fill="#e4e4e4" />
<path d="M914 245 v-13 h4 l4 -3 l2 3 h6 v13z M917 242 h10 v-6 h-3 l-2 3 h-5z" fill="#e6e6e6" fill-rule="evenodd"/>
<path d="M914 280 v-13 h5 l2 -3 l3 3 h6 v13z M918 278 l8 -8 v8z" fill="#e6e6e6" fill-rule="evenodd"/>
<text x="929" y="74" font-family="Liberation Sans" font-size="6" font-weight="bold" fill="#d8d8d8" >ent</text>
<rect x="943" y="77" width="209" height="785" fill="#535353" />
<text x="1136" y="74" font-family="Liberation Sans" font-size="8" font-weight="bold" fill="#d8d8d8" >n</text>
<rect x="943" y="77" width="209" height="21" fill="#3b3b3b" />
<rect x="943" y="77" width="39" height="21" fill="#555555" />
<rect x="983" y="78" width="36" height="20" fill="#484848" />
<path d="M951.1 81.3h8.8v2.0h-8.8zM952.3 81.0h2.0v3.8h-2.0zM956.7 81.0h2.0v3.8h-2.0zM951.6 85.0h7.7v2.0h-7.7zM951.6 90.1h7.7v2.0h-7.7zM950.7 86.0h2.0v5.2h-2.0zM958.4 86.0h2.0v5.2h-2.0zM951.6 87.5h7.7v2.0h-7.7zM962.5 80.9h9.9v2.0h-9.9zM964.2 83.1h6.6v2.0h-6.6zM964.2 86.8h6.6v2.0h-6.6zM963.2 84.1h2.0v3.7h-2.0zM969.8 84.1h2.0v3.7h-2.0zM962.0 89.9h11.0v2.0h-11.0zM966.5 87.8h2.0v3.6h-2.0z" fill="#ececec" opacity="1.0"/>
<path d="M989.1 81.3h8.8v2.0h-8.8zM990.3 81.0h2.0v3.8h-2.0zM994.7 81.0h2.0v3.8h-2.0zM989.6 85.0h7.7v2.0h-7.7zM989.6 90.1h7.7v2.0h-7.7zM988.7 86.0h2.0v5.2h-2.0zM996.4 86.0h2.0v5.2h-2.0zM989.6 87.5h7.7v2.0h-7.7zM1000.5 80.9h9.9v2.0h-9.9zM1002.2 83.1h6.6v2.0h-6.6zM1002.2 86.8h6.6v2.0h-6.6zM1001.2 84.1h2.0v3.7h-2.0zM1007.8 84.1h2.0v3.7h-2.0zM1000.0 89.9h11.0v2.0h-11.0zM1004.5 87.8h2.0v3.6h-2.0z" fill="#bdbdbd" opacity="1.0"/>
<path d="M1139.9 82.0h1.4v8.0h-1.4zM1139.0 83.7h3.2v1.4h-3.2zM1143.0 82.5h4.0v1.4h-4.0zM1143.0 85.3h4.0v1.4h-4.0zM1142.6 88.3h4.4v1.4h-4.4zM1144.3 83.2h1.4v5.8h-1.4z" fill="#d0d0d0" opacity="1.0"/>
<rect x="943" y="98" width="209" height="200" fill="#555555" />
<rect x="1146" y="98" width="1" height="200" fill="#606060" />
<rect x="958" y="124" width="21" height="20" fill="#ffffff" />
<rect x="950" y="116" width="20" height="18" fill="#000" stroke="#f0f0f0" stroke-width="1.5"/>
<rect x="985" y="115" width="116" height="162" fill="url(#cpH)" />
<rect x="985" y="115" width="116" height="162" fill="url(#cpV)" />
<circle cx="1092" cy="130" r="3" fill="none" stroke="#ffd8a0" stroke-width="0.8" opacity="0.6"/>
<rect x="1116" y="115" width="18" height="165" fill="url(#hue)" />
<rect x="943" y="298" width="209" height="1" fill="#4a4a4a" />
<rect x="943" y="299" width="209" height="2" fill="#626262" />
<rect x="943" y="301" width="209" height="3" fill="#3e3e3e" />
<rect x="943" y="304" width="209" height="21" fill="#3b3b3b" />
<rect x="943" y="304" width="39" height="21" fill="#555555" />
<rect x="983" y="305" width="33" height="20" fill="#3a3a3a" />
<rect x="1017" y="305" width="34" height="20" fill="#444444" />
<path d="M951.2 309.0h2.0v11.0h-2.0zM950.0 311.3h4.4v2.0h-4.4zM955.5 309.7h5.5v2.0h-5.5zM955.5 313.5h5.5v2.0h-5.5zM955.0 317.7h6.1v2.0h-6.1zM957.3 310.6h2.0v8.0h-2.0zM962.7 309.6h2.0v9.9h-2.0zM962.0 311.9h3.8v2.0h-3.8zM962.0 315.2h3.3v2.0h-3.3zM967.0 309.1h5.5v2.0h-5.5zM967.0 317.9h5.5v2.0h-5.5zM966.0 310.1h2.0v8.8h-2.0zM971.5 310.1h2.0v8.8h-2.0zM967.0 313.5h5.5v2.0h-5.5z" fill="#ececec" opacity="1.0"/>
<path d="M988.9 309.3h9.2v2.0h-9.2zM988.9 317.7h9.2v2.0h-9.2zM987.9 310.3h2.0v8.4h-2.0zM997.1 310.3h2.0v8.4h-2.0zM988.9 313.5h9.2v2.0h-9.2zM992.5 310.3h2.0v8.4h-2.0zM1000.7 309.6h2.0v9.9h-2.0zM1000.0 311.9h3.8v2.0h-3.8zM1000.0 315.2h3.3v2.0h-3.3zM1005.0 309.1h5.5v2.0h-5.5zM1005.0 317.9h5.5v2.0h-5.5zM1004.0 310.1h2.0v8.8h-2.0zM1009.5 310.1h2.0v8.8h-2.0zM1005.0 313.5h5.5v2.0h-5.5z" fill="#bdbdbd" opacity="1.0"/>
<path d="M1024.1 309.3h8.8v2.0h-8.8zM1025.3 309.0h2.0v3.8h-2.0zM1029.7 309.0h2.0v3.8h-2.0zM1024.7 313.0h7.7v2.0h-7.7zM1024.7 318.1h7.7v2.0h-7.7zM1023.7 313.9h2.0v5.2h-2.0zM1031.4 313.9h2.0v5.2h-2.0zM1024.7 315.5h7.7v2.0h-7.7z" fill="#a8a8a8" opacity="1.0"/>
<path d="M1139.5 310.0h2.7v1.6h-2.7zM1139.5 315.4h2.7v1.6h-2.7zM1138.6 310.8h1.6v5.4h-1.6zM1141.3 310.8h1.6v5.4h-1.6zM1143.0 309.1h5.0v1.6h-5.0zM1143.0 311.8h5.0v1.6h-5.0zM1143.0 314.5h5.0v1.6h-5.0zM1143.1 309.9h1.6v7.6h-1.6zM1146.3 309.9h1.6v7.6h-1.6z" fill="#cfcfcf" opacity="1.0"/>
<rect x="943" y="325" width="209" height="515" fill="#535353" />
<rect x="949" y="332" width="68" height="19" fill="url(#dd)" stroke="#3c3c3c" stroke-width="1"/>
<path d="M953.8 336.3h8.4v1.8h-8.4zM953.8 343.9h8.4v1.8h-8.4zM952.9 337.2h1.8v7.6h-1.8zM961.3 337.2h1.8v7.6h-1.8zM953.8 340.1h8.4v1.8h-8.4zM957.1 337.2h1.8v7.6h-1.8zM964.8 336.3h8.0v1.8h-8.0zM965.9 336.0h1.8v3.5h-1.8zM969.9 336.0h1.8v3.5h-1.8zM965.3 339.6h7.0v1.8h-7.0zM965.3 344.3h7.0v1.8h-7.0zM964.4 340.5h1.8v4.7h-1.8zM971.4 340.5h1.8v4.7h-1.8zM965.3 341.9h7.0v1.8h-7.0zM975.6 336.3h8.0v1.8h-8.0zM976.7 336.0h1.8v3.5h-1.8zM980.7 336.0h1.8v3.5h-1.8zM976.1 339.6h7.0v1.8h-7.0zM976.1 344.3h7.0v1.8h-7.0zM975.2 340.5h1.8v4.7h-1.8zM982.2 340.5h1.8v4.7h-1.8zM976.1 341.9h7.0v1.8h-7.0z" fill="#f0f0f0" opacity="1.0"/>
<path d="M1026.9 336.3h9.2v2.0h-9.2zM1026.9 344.7h9.2v2.0h-9.2zM1025.9 337.3h2.0v8.4h-2.0zM1035.1 337.3h2.0v8.4h-2.0zM1026.9 340.5h9.2v2.0h-9.2zM1030.5 337.3h2.0v8.4h-2.0z" fill="#e4e4e4" opacity="1.0"/>
<path d="M1050.9 336.3h9.2v2.0h-9.2zM1050.9 344.7h9.2v2.0h-9.2zM1049.9 337.3h2.0v8.4h-2.0zM1059.1 337.3h2.0v8.4h-2.0zM1050.9 340.5h9.2v2.0h-9.2zM1054.5 337.3h2.0v8.4h-2.0z" fill="#e4e4e4" opacity="1.0"/>
<path d="M1075.1 336.3h8.8v2.0h-8.8zM1076.3 336.0h2.0v3.8h-2.0zM1080.7 336.0h2.0v3.8h-2.0zM1075.7 340.0h7.7v2.0h-7.7zM1075.7 345.1h7.7v2.0h-7.7zM1074.7 340.9h2.0v5.2h-2.0zM1082.4 340.9h2.0v5.2h-2.0zM1075.7 342.5h7.7v2.0h-7.7z" fill="#e4e4e4" opacity="1.0"/>
<path d="M1098.2 336.0h2.0v11.0h-2.0zM1097.0 338.3h4.4v2.0h-4.4zM1102.5 336.7h5.5v2.0h-5.5zM1102.5 340.5h5.5v2.0h-5.5zM1102.0 344.7h6.1v2.0h-6.1zM1104.3 337.6h2.0v8.0h-2.0z" fill="#e4e4e4" opacity="1.0"/>
<path d="M1119.0 338.3h11.0v2.0h-11.0zM1123.5 336.0h2.0v11.0h-2.0zM1120.7 342.2h7.7v2.0h-7.7zM1120.2 343.1h2.0v3.3h-2.0zM1126.8 343.1h2.0v3.3h-2.0z" fill="#e4e4e4" opacity="1.0"/>
<path d="M1140 335 h9 l-1 5 l-3 2 l-3 -2z" fill="#dadada" />
<rect x="943" y="354" width="209" height="1" fill="#444444" />
<rect x="949" y="359" width="99" height="18" fill="url(#dd)" stroke="#3a3a3a" stroke-width="1"/>
<path d="M953.5 362.1h4.0v1.8h-4.0zM953.5 370.1h4.0v1.8h-4.0zM952.6 363.0h1.8v8.0h-1.8zM956.6 363.0h1.8v8.0h-1.8zM953.5 366.1h4.0v1.8h-4.0zM958.5 362.1h4.0v1.8h-4.0zM958.5 370.1h4.0v1.8h-4.0zM957.6 363.0h1.8v8.0h-1.8zM961.6 363.0h1.8v8.0h-1.8zM959.6 363.0h1.8v8.0h-1.8zM964.5 363.1h3.0v1.8h-3.0zM964.5 369.1h3.0v1.8h-3.0zM963.6 364.0h1.8v6.0h-1.8zM966.6 364.0h1.8v6.0h-1.8zM968.5 362.1h5.5v1.8h-5.5zM968.5 365.1h5.5v1.8h-5.5zM968.5 368.1h5.5v1.8h-5.5zM968.6 363.0h1.8v8.5h-1.8zM972.1 363.0h1.8v8.5h-1.8z" fill="#f0f0f0" opacity="1.0"/>
<path d="M1039 364 h5 v8 h-5z" fill="#bdbdbd" />
<path d="M1057.0 364.3h11.0v2.0h-11.0zM1061.5 362.0h2.0v11.0h-2.0zM1058.7 368.2h7.7v2.0h-7.7zM1058.2 369.1h2.0v3.3h-2.0zM1064.8 369.1h2.0v3.3h-2.0zM1069.7 362.3h8.8v2.0h-8.8zM1070.9 362.0h2.0v3.8h-2.0zM1075.3 362.0h2.0v3.8h-2.0zM1070.2 366.0h7.7v2.0h-7.7zM1070.2 371.1h7.7v2.0h-7.7zM1069.3 366.9h2.0v5.2h-2.0zM1077.0 366.9h2.0v5.2h-2.0zM1070.2 368.5h7.7v2.0h-7.7zM1081.3 362.3h8.8v2.0h-8.8zM1082.5 362.0h2.0v3.8h-2.0zM1086.9 362.0h2.0v3.8h-2.0zM1081.9 366.0h7.7v2.0h-7.7zM1081.9 371.1h7.7v2.0h-7.7zM1080.9 366.9h2.0v5.2h-2.0zM1088.6 366.9h2.0v5.2h-2.0zM1081.9 368.5h7.7v2.0h-7.7z" fill="#ececec" opacity="1.0"/>
<rect x="1101" y="359" width="33" height="18" fill="#2f2f2f" stroke="#5a5a5a" stroke-width="0.8"/>
<path d="M1105.5 363.1h3.6v1.6h-3.6zM1105.5 370.3h3.6v1.6h-3.6zM1104.6 363.9h1.6v7.2h-1.6zM1108.2 363.9h1.6v7.2h-1.6zM1105.5 366.7h3.6v1.6h-3.6zM1110.0 363.1h3.6v1.6h-3.6zM1110.0 370.3h3.6v1.6h-3.6zM1109.1 363.9h1.6v7.2h-1.6zM1112.7 363.9h1.6v7.2h-1.6zM1110.9 363.9h1.6v7.2h-1.6zM1115.0 363.4h1.6v8.1h-1.6zM1114.5 365.3h3.1v1.6h-3.1zM1114.5 368.0h2.7v1.6h-2.7zM1118.5 363.1h4.5v1.6h-4.5zM1118.5 370.3h4.5v1.6h-4.5zM1117.7 363.9h1.6v7.2h-1.6zM1122.2 363.9h1.6v7.2h-1.6zM1118.5 366.7h4.5v1.6h-4.5zM1124.7 363.3h7.6v1.6h-7.6zM1124.7 370.1h7.6v1.6h-7.6zM1123.9 364.1h1.6v6.8h-1.6zM1131.5 364.1h1.6v6.8h-1.6zM1124.7 366.7h7.6v1.6h-7.6zM1127.7 364.1h1.6v6.8h-1.6z" fill="#dcdcdc" opacity="1.0"/>
<rect x="1136" y="359" width="16" height="18" fill="#4e4e4e" />
<path d="M1139 364 q4 -2 7 2 q-3 4 -7 2z" fill="#dadada" />
<rect x="943" y="380" width="209" height="1" fill="#444444" />
<path d="M950.6 385.9h10.8v2.2h-10.8zM952.4 388.3h7.2v2.2h-7.2zM952.4 392.4h7.2v2.2h-7.2zM951.3 389.4h2.2v4.1h-2.2zM958.5 389.4h2.2v4.1h-2.2zM950.0 395.7h12.0v2.2h-12.0zM954.9 393.4h2.2v4.0h-2.2z" fill="#d8d8d8" opacity="1.0"/>
<path d="M966.7 386.6h2.2v10.8h-2.2zM966.0 389.1h4.2v2.2h-4.2zM966.0 392.7h3.6v2.2h-3.6zM971.4 386.1h6.0v2.2h-6.0zM971.4 395.7h6.0v2.2h-6.0zM970.3 387.2h2.2v9.6h-2.2zM976.3 387.2h2.2v9.6h-2.2zM971.4 390.9h6.0v2.2h-6.0z" fill="#d8d8d8" opacity="1.0"/>
<path d="M982.0 388.5h12.0v2.2h-12.0zM986.9 386.0h2.2v12.0h-2.2zM983.8 392.7h8.4v2.2h-8.4zM983.3 393.8h2.2v3.6h-2.2zM990.5 393.8h2.2v3.6h-2.2z" fill="#d8d8d8" opacity="1.0"/>
<path d="M1007.3 386.0h2.2v12.0h-2.2zM1006.0 388.5h4.8v2.2h-4.8zM1012.0 386.7h6.0v2.2h-6.0zM1012.0 390.9h6.0v2.2h-6.0zM1011.4 395.5h6.6v2.2h-6.6zM1013.9 387.8h2.2v8.8h-2.2z" fill="#d8d8d8" opacity="1.0"/>
<path d="M1036.0 386.4h10.1v2.2h-10.1zM1036.0 395.5h10.1v2.2h-10.1zM1034.9 387.4h2.2v9.1h-2.2zM1045.0 387.4h2.2v9.1h-2.2zM1036.0 390.9h10.1v2.2h-10.1zM1039.9 387.4h2.2v9.1h-2.2z" fill="#d8d8d8" opacity="1.0"/>
<path d="M1070.2 386.4h9.6v2.2h-9.6zM1071.5 386.0h2.2v4.2h-2.2zM1076.3 386.0h2.2v4.2h-2.2zM1070.8 390.3h8.4v2.2h-8.4zM1070.8 396.0h8.4v2.2h-8.4zM1069.7 391.4h2.2v5.6h-2.2zM1078.1 391.4h2.2v5.6h-2.2zM1070.8 393.1h8.4v2.2h-8.4zM1082.7 386.4h9.6v2.2h-9.6zM1084.0 386.0h2.2v4.2h-2.2zM1088.8 386.0h2.2v4.2h-2.2zM1083.3 390.3h8.4v2.2h-8.4zM1083.3 396.0h8.4v2.2h-8.4zM1082.2 391.4h2.2v5.6h-2.2zM1090.6 391.4h2.2v5.6h-2.2zM1083.3 393.1h8.4v2.2h-8.4z" fill="#e8e8e8" opacity="1.0"/>
<rect x="1101" y="384" width="33" height="19" fill="#2f2f2f" stroke="#5a5a5a" stroke-width="0.8"/>
<path d="M1105.5 389.1h3.6v1.6h-3.6zM1105.5 396.3h3.6v1.6h-3.6zM1104.6 389.9h1.6v7.2h-1.6zM1108.2 389.9h1.6v7.2h-1.6zM1105.5 392.7h3.6v1.6h-3.6zM1110.0 389.1h3.6v1.6h-3.6zM1110.0 396.3h3.6v1.6h-3.6zM1109.1 389.9h1.6v7.2h-1.6zM1112.7 389.9h1.6v7.2h-1.6zM1110.9 389.9h1.6v7.2h-1.6zM1114.5 390.9h9.0v1.6h-9.0zM1118.2 389.0h1.6v9.0h-1.6zM1115.8 394.0h6.3v1.6h-6.3zM1115.5 394.9h1.6v2.7h-1.6zM1120.9 394.9h1.6v2.7h-1.6zM1124.7 389.3h7.6v1.6h-7.6zM1124.7 396.1h7.6v1.6h-7.6zM1123.9 390.1h1.6v6.8h-1.6zM1131.5 390.1h1.6v6.8h-1.6zM1124.7 392.7h7.6v1.6h-7.6zM1127.7 390.1h1.6v6.8h-1.6z" fill="#dcdcdc" opacity="1.0"/>
<rect x="1136" y="384" width="16" height="19" fill="#4e4e4e" />
<rect x="1139" y="390" width="5" height="5" fill="#cfcfcf" />
<rect x="943" y="408" width="209" height="2" fill="#3f3f3f" />
<rect x="943" y="410" width="29" height="41" fill="#4f4f4f" />
<rect x="972" y="410" width="167" height="41" fill="#607590" />
<rect x="943" y="451" width="209" height="1" fill="#3c3c3c" />
<rect x="943" y="452" width="196" height="43" fill="#535353" />
<rect x="943" y="495" width="196" height="1" fill="#474747" />
<rect x="1139" y="410" width="1" height="423" fill="#3e3e3e" />
<rect x="1140" y="410" width="12" height="423" fill="#4e4e4e" />
<rect x="975" y="413" width="33" height="34" fill="url(#chk)" stroke="#1c2a40" stroke-width="1.5"/>
<rect x="974" y="456" width="27" height="35" fill="url(#chk)" stroke="#2a2a2a" stroke-width="1.5"/>
<ellipse cx="958" cy="431" rx="5.5" ry="3.8" fill="none" stroke="#e6e6e6" stroke-width="2"/>
<circle cx="958" cy="431" r="1.6" fill="#555"/>
<ellipse cx="958" cy="474" rx="5.5" ry="3.8" fill="none" stroke="#e6e6e6" stroke-width="2"/>
<circle cx="958" cy="474" r="1.6" fill="#555"/>
<path d="M1015.0 427.3h11.0v2.0h-11.0zM1019.5 425.0h2.0v11.0h-2.0zM1016.6 431.2h7.7v2.0h-7.7zM1016.2 432.1h2.0v3.3h-2.0zM1022.8 432.1h2.0v3.3h-2.0zM1027.0 424.9h9.9v2.0h-9.9zM1028.7 427.1h6.6v2.0h-6.6zM1028.7 430.8h6.6v2.0h-6.6zM1027.7 428.1h2.0v3.7h-2.0zM1034.3 428.1h2.0v3.7h-2.0zM1026.5 433.9h11.0v2.0h-11.0zM1031.0 431.8h2.0v3.6h-2.0zM1038.5 426.2h3.3v2.0h-3.3zM1038.5 432.8h3.3v2.0h-3.3zM1037.6 427.2h2.0v6.6h-2.0zM1040.9 427.2h2.0v6.6h-2.0zM1043.0 425.1h6.1v2.0h-6.1zM1043.0 428.4h6.1v2.0h-6.1zM1043.0 431.7h6.1v2.0h-6.1zM1043.1 426.1h2.0v9.3h-2.0zM1046.9 426.1h2.0v9.3h-2.0z" fill="#f2f2f2" opacity="1.0"/>
<path d="M1009.5 467.9h9.9v2.0h-9.9zM1011.2 470.1h6.6v2.0h-6.6zM1011.2 473.8h6.6v2.0h-6.6zM1010.2 471.1h2.0v3.7h-2.0zM1016.8 471.1h2.0v3.7h-2.0zM1009.0 476.9h11.0v2.0h-11.0zM1013.5 474.8h2.0v3.6h-2.0zM1021.0 469.2h3.3v2.0h-3.3zM1021.0 475.8h3.3v2.0h-3.3zM1020.1 470.2h2.0v6.6h-2.0zM1023.4 470.2h2.0v6.6h-2.0zM1025.5 468.1h6.1v2.0h-6.1zM1025.5 471.4h6.1v2.0h-6.1zM1025.5 474.7h6.1v2.0h-6.1zM1025.6 469.1h2.0v9.3h-2.0zM1029.4 469.1h2.0v9.3h-2.0z" fill="#f2f2f2" opacity="1.0"/>
<path d="M1114 479 l5 -8 l5 8 z M1117 479 l2 -3 l2 3" fill="none" stroke="#e6e6e6" stroke-width="1.8" />
<rect x="943" y="839" width="209" height="1" fill="#3a3a3a" />
<rect x="943" y="840" width="209" height="22" fill="#585858" />
<path d="M969.5 844.9h9.0v1.8h-9.0zM971.0 846.9h6.0v1.8h-6.0zM971.0 850.3h6.0v1.8h-6.0zM970.1 847.8h1.8v3.4h-1.8zM976.1 847.8h1.8v3.4h-1.8zM969.0 853.1h10.0v1.8h-10.0zM973.1 851.2h1.8v3.3h-1.8zM980.3 845.3h8.4v1.8h-8.4zM980.3 852.9h8.4v1.8h-8.4zM979.4 846.2h1.8v7.6h-1.8zM987.8 846.2h1.8v7.6h-1.8zM980.3 849.1h8.4v1.8h-8.4zM983.6 846.2h1.8v7.6h-1.8z" fill="#a0a0a0" opacity="0.8"/>
<path d="M1004 851 q7 -7 15 0 q-7 6 -15 0 M1011 846 v10" fill="none" stroke="#e4e4e4" stroke-width="1.8" />
<path d="M1031 858 l5 -10 q4 -3 6 1 l-3 3 h4 v6z" fill="#ececec" />
<path d="M1059 851 q0 -6 7 -6 q7 0 7 6 v6 h-14z M1063 855 l3 -5 l3 5z" fill="#ececec" fill-rule="evenodd"/>
<path d="M1088.6 845.1h4.8v2.2h-4.8zM1088.6 854.7h4.8v2.2h-4.8zM1087.5 846.2h2.2v9.6h-2.2zM1092.3 846.2h2.2v9.6h-2.2zM1088.6 849.9h4.8v2.2h-4.8zM1094.6 845.1h4.8v2.2h-4.8zM1094.6 854.7h4.8v2.2h-4.8zM1093.5 846.2h2.2v9.6h-2.2zM1098.3 846.2h2.2v9.6h-2.2zM1095.9 846.2h2.2v9.6h-2.2z" fill="#ececec" opacity="1.0"/>
<path d="M1115.0 847.5h12.0v2.2h-12.0zM1119.9 845.0h2.2v12.0h-2.2zM1116.8 851.7h8.4v2.2h-8.4zM1116.3 852.8h2.2v3.6h-2.2zM1123.5 852.8h2.2v3.6h-2.2z" fill="#ececec" opacity="1.0"/>
</svg>
</body></html>
